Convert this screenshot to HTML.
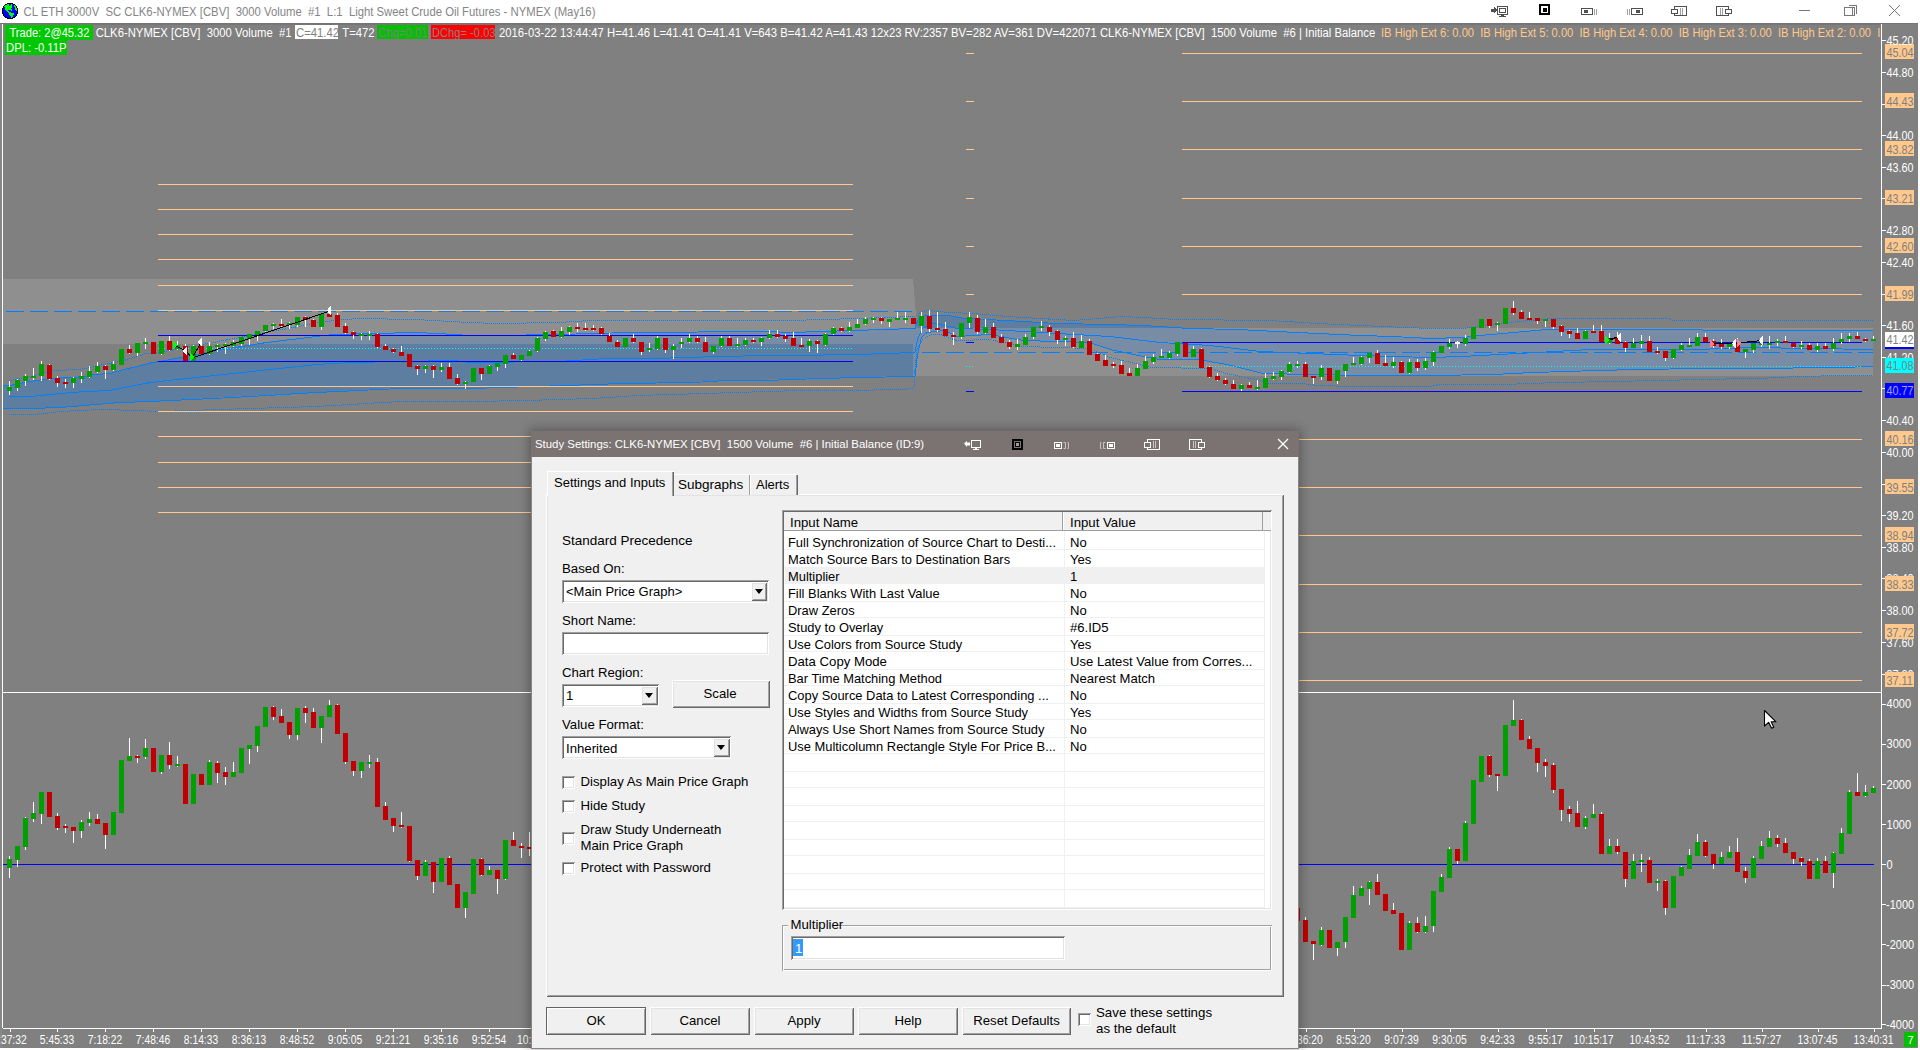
<!DOCTYPE html>
<html><head><meta charset="utf-8"><style>
html,body{margin:0;padding:0;width:1920px;height:1050px;overflow:hidden;background:#fff}
body{position:relative;font-family:"Liberation Sans", sans-serif}
.a{position:absolute}
</style></head><body>
<svg width="1920" height="1050" style="position:absolute;left:0;top:0" font-family='"Liberation Sans", sans-serif' shape-rendering="crispEdges"><rect x="0" y="0" width="1920" height="1050" fill="#ffffff" />
<rect x="0" y="23" width="1918" height="1025" fill="#808080" />
<rect x="0" y="23" width="1920" height="2" fill="#767676" />
<rect x="2" y="24" width="1" height="1004" fill="#ffffff" />
<rect x="0" y="24" width="2" height="1024" fill="#878787" />
<polygon points="3,385.3 9,385.3 30,381.4 51,378 70,376.7 86,376.3 94,374 110,373.3 124,369.4 137,366 152.5,361.7 160,361 216.7,350 266.7,341.7 333,334 415,332 438,333.3 470,334.7 495,335 558,334 630,332.2 766.7,330.8 790,331.7 915,327.5 915,375.8 856.7,377 790,379.2 766.7,379.5 726.7,380.5 693.3,381.7 621.7,383.3 566.7,385.3 470,388.3 400,387.5 316.7,392.5 233,396.7 150,401.3 120,402 60,407 30,408.4 9,408.4 3,408.4" fill="rgba(40,120,210,0.40)" />
<polygon points="915,327.5 917,322 919.5,316 928.3,315 948,315.3 965,318.3 1006.7,320 1056.7,323.3 1110,324.2 1143,325.3 1190,328 1238.3,329.2 1276.7,330.8 1318.3,333.3 1360,335 1393.3,336.3 1430,337.5 1463,337 1480,335 1513.3,332.5 1546.7,329.2 1663.3,328.8 1740,329.5 1823,330.3 1855,329.5 1873,329.5 1873,366.3 1838,366.9 1750,368 1701.7,368.3 1638.3,369.2 1596.7,370.3 1566.7,371.3 1533.3,372.5 1493.3,374.2 1430,375.3 1360,375.3 1310,374.2 1263.3,372.8 1226.7,364.2 1198,359.2 1160,359.2 1143.3,355.8 1110,349.2 1090,342.5 1023.3,340 990,334.2 956.7,335.8 945,330.5 927,331.6 921.3,337.4 917.3,355.6 915,376" fill="rgba(40,120,210,0.40)" />
<polygon points="3,279 913,279 921,376 913,376 913,344 3,344" fill="rgba(172,172,172,0.343)" />
<polygon points="917,328 1873,328 1873,376 921,376" fill="rgba(172,172,172,0.343)" />
<polyline points="3,385.5 9,385.5 30,381.5 51,378.5 70,377.5 86,376.5 94,374.5 110,373.5 124,369.5 137,366.5 152.5,362.5 160,361.5 216.7,350.5 266.7,342.5 333,334.5 415,332.5 438,333.5 470,335.5 495,335.5 558,334.5 630,332.5 766.7,331.5 790,332.5 915,328.5" fill="none" stroke="#0080ff" stroke-width="1" />
<polyline points="9,396.5 30,396.5 60,393.5 86,391.5 110,390.5 150,382.5 233,373.5 316.7,364.5 350,362.5 455,360.5 470,362.5 558,361.5 606.7,358.5 653,358.5 720,356.5 766.7,355.5 790,355.5 856.7,354.5 915,352.5" fill="none" stroke="#0080ff" stroke-width="1" />
<polyline points="3,408.5 9,408.5 30,408.5 60,407.5 120,402.5 150,401.5 233,397.5 316.7,392.5 400,388.5 470,388.5 566.7,385.5 621.7,383.5 693.3,382.5 726.7,380.5 766.7,380.5 790,379.5 856.7,377.5 915,376.5" fill="none" stroke="#0080ff" stroke-width="1" />
<polyline points="915,328.5 917,322.5 919.5,316.5 928.3,315.5 948,315.5 965,318.5 1006.7,320.5 1056.7,323.5 1110,324.5 1143,325.5 1190,328.5 1238.3,329.5 1276.7,331.5 1318.3,333.5 1360,335.5 1393.3,336.5 1430,338.5 1463,337.5 1480,335.5 1513.3,332.5 1546.7,329.5 1663.3,329.5 1740,330.5 1823,330.5 1855,330.5 1873,330.5" fill="none" stroke="#0080ff" stroke-width="1" />
<polyline points="915,352.5 917.8,338.5 922.4,328.5 932.7,323.5 945,325.5 956.7,328.5 990,329.5 1040,332.5 1110,336.5 1160,342.5 1210,345.5 1260,351.5 1310,353.5 1360,355.5 1430,357.5 1462,356.5 1536.7,352.5 1590,349.5 1697,349.5 1750,347.5 1873,349.5" fill="none" stroke="#0080ff" stroke-width="1" />
<polyline points="915,376.5 917.3,356.5 921.3,337.5 927,332.5 945,330.5 956.7,336.5 990,334.5 1023.3,340.5 1090,342.5 1110,349.5 1143.3,356.5 1160,359.5 1198,359.5 1226.7,364.5 1263.3,373.5 1310,374.5 1360,375.5 1430,375.5 1493.3,374.5 1533.3,372.5 1566.7,371.5 1596.7,370.5 1638.3,369.5 1701.7,368.5 1750,368.5 1838,367.5 1873,366.5" fill="none" stroke="#0080ff" stroke-width="1" />
<polyline points="9,380.5 32,376.5 53,370.5 80,369.5 94,366.5 124,360.5 146,353.5 160,352.5 250,335.5 325,321.5 358,318.5 415,319.5 433,320.5 470,322.5 495,323.5 558,322.5 590,320.5 766.7,320.5 790,320.5 856.7,318.5 915,316.5" fill="none" stroke="#0080ff" stroke-width="1" stroke-dasharray="1,1"/>
<polyline points="9,414.5 34,414.5 62,411.5 80,410.5 103,409.5 137,410.5 160,411.5 250,408.5 316.7,406.5 400,401.5 470,401.5 526.7,400.5 591.7,398.5 638.3,395.5 703.3,393.5 766.7,391.5 800,390.5 846.7,390.5 903,389.5 914,388.5" fill="none" stroke="#0080ff" stroke-width="1" stroke-dasharray="1,1"/>
<polyline points="918,315.5 920,312.5 928.3,310.5 948.3,312.5 973.3,313.5 1006.7,316.5 1040,318.5 1073.3,320.5 1110,317.5 1120,316.5 1142,317.5 1176.7,319.5 1270,320.5 1318.3,323.5 1360,325.5 1430,328.5 1463,328.5 1508.3,322.5 1530,320.5 1551.7,318.5 1670,318.5 1672,320.5 1750,320.5 1873,320.5" fill="none" stroke="#0080ff" stroke-width="1" stroke-dasharray="1,1"/>
<polyline points="914,388.5 915,370.5 916.7,350.5 923.3,338.5 931.7,334.5 940,334.5 956.7,340.5 990,339.5 1023.3,346.5 1090,348.5 1110,357.5 1143.3,365.5 1151.7,367.5 1210,368.5 1226.7,373.5 1260,380.5 1270,383.5 1301.7,383.5 1318.3,385.5 1350,386.5 1430,386.5 1440,384.5 1501.7,384.5 1560,382.5 1613.3,381.5 1703.3,379.5 1750,378.5 1760,378.5 1798,376.5 1846,375.5 1873,375.5" fill="none" stroke="#0080ff" stroke-width="1" stroke-dasharray="1,1"/>
<line x1="158" y1="184.5" x2="853" y2="184.5" stroke="#ffc88c" stroke-width="1" />
<line x1="158" y1="209.5" x2="853" y2="209.5" stroke="#ffc88c" stroke-width="1" />
<line x1="158" y1="234.5" x2="853" y2="234.5" stroke="#ffc88c" stroke-width="1" />
<line x1="158" y1="259.5" x2="853" y2="259.5" stroke="#ffc88c" stroke-width="1" />
<line x1="158" y1="285.5" x2="853" y2="285.5" stroke="#ffc88c" stroke-width="1" />
<line x1="158" y1="310.5" x2="853" y2="310.5" stroke="#ffc88c" stroke-width="1" />
<line x1="158" y1="335.5" x2="853" y2="335.5" stroke="#0000ff" stroke-width="1" />
<line x1="158" y1="361.5" x2="853" y2="361.5" stroke="#0000ff" stroke-width="1" />
<line x1="158" y1="386.5" x2="853" y2="386.5" stroke="#ffc88c" stroke-width="1" />
<line x1="158" y1="411.5" x2="853" y2="411.5" stroke="#ffc88c" stroke-width="1" />
<line x1="158" y1="436.5" x2="853" y2="436.5" stroke="#ffc88c" stroke-width="1" />
<line x1="158" y1="462.5" x2="853" y2="462.5" stroke="#ffc88c" stroke-width="1" />
<line x1="158" y1="487.5" x2="853" y2="487.5" stroke="#ffc88c" stroke-width="1" />
<line x1="158" y1="512.5" x2="853" y2="512.5" stroke="#ffc88c" stroke-width="1" />
<line x1="1182" y1="53.5" x2="1862" y2="53.5" stroke="#ffc88c" stroke-width="1" />
<line x1="966" y1="53.5" x2="974" y2="53.5" stroke="#ffc88c" stroke-width="1" />
<line x1="1182" y1="101.5" x2="1862" y2="101.5" stroke="#ffc88c" stroke-width="1" />
<line x1="966" y1="101.5" x2="974" y2="101.5" stroke="#ffc88c" stroke-width="1" />
<line x1="1182" y1="149.5" x2="1862" y2="149.5" stroke="#ffc88c" stroke-width="1" />
<line x1="966" y1="149.5" x2="974" y2="149.5" stroke="#ffc88c" stroke-width="1" />
<line x1="1182" y1="198.5" x2="1862" y2="198.5" stroke="#ffc88c" stroke-width="1" />
<line x1="966" y1="198.5" x2="974" y2="198.5" stroke="#ffc88c" stroke-width="1" />
<line x1="1182" y1="246.5" x2="1862" y2="246.5" stroke="#ffc88c" stroke-width="1" />
<line x1="966" y1="246.5" x2="974" y2="246.5" stroke="#ffc88c" stroke-width="1" />
<line x1="1182" y1="294.5" x2="1862" y2="294.5" stroke="#ffc88c" stroke-width="1" />
<line x1="966" y1="294.5" x2="974" y2="294.5" stroke="#ffc88c" stroke-width="1" />
<line x1="1182" y1="439.5" x2="1862" y2="439.5" stroke="#ffc88c" stroke-width="1" />
<line x1="966" y1="439.5" x2="974" y2="439.5" stroke="#ffc88c" stroke-width="1" />
<line x1="1182" y1="487.5" x2="1862" y2="487.5" stroke="#ffc88c" stroke-width="1" />
<line x1="966" y1="487.5" x2="974" y2="487.5" stroke="#ffc88c" stroke-width="1" />
<line x1="1182" y1="535.5" x2="1862" y2="535.5" stroke="#ffc88c" stroke-width="1" />
<line x1="966" y1="535.5" x2="974" y2="535.5" stroke="#ffc88c" stroke-width="1" />
<line x1="1182" y1="584.5" x2="1862" y2="584.5" stroke="#ffc88c" stroke-width="1" />
<line x1="966" y1="584.5" x2="974" y2="584.5" stroke="#ffc88c" stroke-width="1" />
<line x1="1182" y1="632.5" x2="1862" y2="632.5" stroke="#ffc88c" stroke-width="1" />
<line x1="966" y1="632.5" x2="974" y2="632.5" stroke="#ffc88c" stroke-width="1" />
<line x1="1182" y1="680.5" x2="1862" y2="680.5" stroke="#ffc88c" stroke-width="1" />
<line x1="966" y1="680.5" x2="974" y2="680.5" stroke="#ffc88c" stroke-width="1" />
<line x1="1182" y1="342.5" x2="1862" y2="342.5" stroke="#0000ff" stroke-width="1" />
<line x1="966" y1="342.5" x2="974" y2="342.5" stroke="#0000ff" stroke-width="1" />
<line x1="1182" y1="391.5" x2="1862" y2="391.5" stroke="#0000ff" stroke-width="1" />
<line x1="966" y1="391.5" x2="974" y2="391.5" stroke="#0000ff" stroke-width="1" />
<line x1="158" y1="348.5" x2="853" y2="348.5" stroke="#00ffff" stroke-width="1" stroke-dasharray="1,2"/>
<line x1="1182" y1="366.5" x2="1862" y2="366.5" stroke="#00ffff" stroke-width="1" stroke-dasharray="1,2"/>
<line x1="966" y1="366.5" x2="974" y2="366.5" stroke="#00ffff" stroke-width="1" stroke-dasharray="1,2"/>
<line x1="6" y1="311.5" x2="915" y2="311.5" stroke="#0080ff" stroke-width="1" stroke-dasharray="18,6"/>
<line x1="922" y1="352.5" x2="1873" y2="352.5" stroke="#0080ff" stroke-width="1" stroke-dasharray="18,6"/>
<rect x="9" y="381" width="1" height="14" fill="#ffffff" />
<rect x="7" y="387" width="5" height="4" fill="#00a000" />
<rect x="17" y="379" width="1" height="12" fill="#ffffff" />
<rect x="15" y="380" width="5" height="8" fill="#00a000" />
<rect x="25" y="374" width="1" height="12" fill="#ffffff" />
<rect x="23" y="376" width="5" height="5" fill="#00a000" />
<rect x="33" y="368" width="1" height="12" fill="#ffffff" />
<rect x="31" y="376" width="5" height="2" fill="#00a000" />
<rect x="41" y="361" width="1" height="20" fill="#ffffff" />
<rect x="39" y="364" width="5" height="12" fill="#00a000" />
<rect x="49" y="364" width="1" height="16" fill="#ffffff" />
<rect x="47" y="365" width="5" height="14" fill="#c00000" />
<rect x="57" y="376" width="1" height="11" fill="#ffffff" />
<rect x="55" y="378" width="5" height="5" fill="#c00000" />
<rect x="65" y="379" width="1" height="9" fill="#ffffff" />
<rect x="63" y="382" width="5" height="2" fill="#c00000" />
<rect x="73" y="377" width="1" height="11" fill="#ffffff" />
<rect x="71" y="378" width="5" height="5" fill="#00a000" />
<rect x="81" y="372" width="1" height="11" fill="#ffffff" />
<rect x="79" y="376" width="5" height="3" fill="#00a000" />
<rect x="89" y="366" width="1" height="12" fill="#ffffff" />
<rect x="87" y="371" width="5" height="6" fill="#00a000" />
<rect x="97" y="362" width="1" height="11" fill="#ffffff" />
<rect x="95" y="366" width="5" height="6" fill="#00a000" />
<rect x="105" y="365" width="1" height="14" fill="#ffffff" />
<rect x="103" y="366" width="5" height="4" fill="#c00000" />
<rect x="113" y="361" width="1" height="10" fill="#ffffff" />
<rect x="111" y="364" width="5" height="6" fill="#00a000" />
<rect x="121" y="349" width="1" height="16" fill="#ffffff" />
<rect x="119" y="349" width="5" height="16" fill="#00a000" />
<rect x="129" y="345" width="1" height="9" fill="#ffffff" />
<rect x="127" y="349" width="5" height="4" fill="#c00000" />
<rect x="137" y="343" width="1" height="13" fill="#ffffff" />
<rect x="135" y="343" width="5" height="10" fill="#00a000" />
<rect x="145" y="338" width="1" height="11" fill="#ffffff" />
<rect x="143" y="342" width="5" height="2" fill="#00a000" />
<rect x="153" y="342" width="1" height="12" fill="#ffffff" />
<rect x="151" y="342" width="5" height="12" fill="#c00000" />
<rect x="161" y="341" width="1" height="14" fill="#ffffff" />
<rect x="159" y="341" width="5" height="13" fill="#00a000" />
<rect x="169" y="336" width="1" height="15" fill="#ffffff" />
<rect x="167" y="341" width="5" height="9" fill="#c00000" />
<rect x="177" y="341" width="1" height="9" fill="#ffffff" />
<rect x="175" y="345" width="5" height="4" fill="#00a000" />
<rect x="185" y="344" width="1" height="17" fill="#ffffff" />
<rect x="183" y="346" width="5" height="15" fill="#c00000" />
<rect x="193" y="345" width="1" height="16" fill="#ffffff" />
<rect x="191" y="346" width="5" height="15" fill="#00a000" />
<rect x="201" y="340" width="1" height="14" fill="#ffffff" />
<rect x="199" y="346" width="5" height="8" fill="#c00000" />
<rect x="209" y="342" width="1" height="13" fill="#ffffff" />
<rect x="207" y="346" width="5" height="8" fill="#00a000" />
<rect x="217" y="344" width="1" height="8" fill="#ffffff" />
<rect x="215" y="345" width="5" height="2" fill="#00a000" />
<rect x="225" y="343" width="1" height="11" fill="#ffffff" />
<rect x="223" y="344" width="5" height="2" fill="#00a000" />
<rect x="233" y="340" width="1" height="7" fill="#ffffff" />
<rect x="231" y="342" width="5" height="4" fill="#00a000" />
<rect x="241" y="337" width="1" height="9" fill="#ffffff" />
<rect x="239" y="337" width="5" height="7" fill="#00a000" />
<rect x="249" y="334" width="1" height="11" fill="#ffffff" />
<rect x="247" y="334" width="5" height="5" fill="#00a000" />
<rect x="257" y="331" width="1" height="10" fill="#ffffff" />
<rect x="255" y="331" width="5" height="4" fill="#00a000" />
<rect x="265" y="325" width="1" height="7" fill="#ffffff" />
<rect x="263" y="325" width="5" height="6" fill="#00a000" />
<rect x="273" y="323" width="1" height="6" fill="#ffffff" />
<rect x="271" y="324" width="5" height="2" fill="#00a000" />
<rect x="281" y="319" width="1" height="8" fill="#ffffff" />
<rect x="279" y="324" width="5" height="2" fill="#c00000" />
<rect x="289" y="322" width="1" height="7" fill="#ffffff" />
<rect x="287" y="323" width="5" height="2" fill="#00a000" />
<rect x="297" y="317" width="1" height="10" fill="#ffffff" />
<rect x="295" y="317" width="5" height="8" fill="#00a000" />
<rect x="305" y="316" width="1" height="11" fill="#ffffff" />
<rect x="303" y="317" width="5" height="3" fill="#c00000" />
<rect x="313" y="319" width="1" height="8" fill="#ffffff" />
<rect x="311" y="320" width="5" height="7" fill="#c00000" />
<rect x="321" y="314" width="1" height="16" fill="#ffffff" />
<rect x="319" y="314" width="5" height="13" fill="#00a000" />
<rect x="329" y="313" width="1" height="4" fill="#ffffff" />
<rect x="327" y="314" width="5" height="3" fill="#c00000" />
<rect x="337" y="313" width="1" height="14" fill="#ffffff" />
<rect x="335" y="315" width="5" height="12" fill="#c00000" />
<rect x="345" y="323" width="1" height="11" fill="#ffffff" />
<rect x="343" y="326" width="5" height="7" fill="#c00000" />
<rect x="353" y="331" width="1" height="8" fill="#ffffff" />
<rect x="351" y="332" width="5" height="3" fill="#c00000" />
<rect x="361" y="333" width="1" height="7" fill="#ffffff" />
<rect x="359" y="334" width="5" height="2" fill="#00a000" />
<rect x="369" y="331" width="1" height="9" fill="#ffffff" />
<rect x="367" y="334" width="5" height="2" fill="#00a000" />
<rect x="377" y="333" width="1" height="15" fill="#ffffff" />
<rect x="375" y="334" width="5" height="13" fill="#c00000" />
<rect x="385" y="344" width="1" height="6" fill="#ffffff" />
<rect x="383" y="346" width="5" height="4" fill="#c00000" />
<rect x="393" y="348" width="1" height="5" fill="#ffffff" />
<rect x="391" y="349" width="5" height="3" fill="#c00000" />
<rect x="401" y="346" width="1" height="10" fill="#ffffff" />
<rect x="399" y="352" width="5" height="4" fill="#c00000" />
<rect x="409" y="354" width="1" height="13" fill="#ffffff" />
<rect x="407" y="354" width="5" height="13" fill="#c00000" />
<rect x="417" y="365" width="1" height="10" fill="#ffffff" />
<rect x="415" y="366" width="5" height="3" fill="#c00000" />
<rect x="425" y="365" width="1" height="8" fill="#ffffff" />
<rect x="423" y="366" width="5" height="3" fill="#00a000" />
<rect x="433" y="365" width="1" height="13" fill="#ffffff" />
<rect x="431" y="366" width="5" height="4" fill="#c00000" />
<rect x="441" y="363" width="1" height="9" fill="#ffffff" />
<rect x="439" y="367" width="5" height="3" fill="#00a000" />
<rect x="449" y="363" width="1" height="16" fill="#ffffff" />
<rect x="447" y="367" width="5" height="12" fill="#c00000" />
<rect x="457" y="374" width="1" height="11" fill="#ffffff" />
<rect x="455" y="378" width="5" height="6" fill="#c00000" />
<rect x="465" y="381" width="1" height="8" fill="#ffffff" />
<rect x="463" y="382" width="5" height="2" fill="#00a000" />
<rect x="473" y="368" width="1" height="14" fill="#ffffff" />
<rect x="471" y="368" width="5" height="14" fill="#00a000" />
<rect x="481" y="368" width="1" height="12" fill="#ffffff" />
<rect x="479" y="368" width="5" height="6" fill="#c00000" />
<rect x="489" y="365" width="1" height="9" fill="#ffffff" />
<rect x="487" y="366" width="5" height="8" fill="#00a000" />
<rect x="497" y="363" width="1" height="8" fill="#ffffff" />
<rect x="495" y="363" width="5" height="4" fill="#00a000" />
<rect x="505" y="355" width="1" height="13" fill="#ffffff" />
<rect x="503" y="355" width="5" height="9" fill="#00a000" />
<rect x="513" y="353" width="1" height="6" fill="#ffffff" />
<rect x="511" y="355" width="5" height="4" fill="#c00000" />
<rect x="521" y="355" width="1" height="6" fill="#ffffff" />
<rect x="519" y="355" width="5" height="5" fill="#00a000" />
<rect x="529" y="350" width="1" height="6" fill="#ffffff" />
<rect x="527" y="351" width="5" height="5" fill="#00a000" />
<rect x="537" y="337" width="1" height="15" fill="#ffffff" />
<rect x="535" y="338" width="5" height="13" fill="#00a000" />
<rect x="545" y="331" width="1" height="10" fill="#ffffff" />
<rect x="543" y="332" width="5" height="7" fill="#00a000" />
<rect x="553" y="330" width="1" height="7" fill="#ffffff" />
<rect x="551" y="331" width="5" height="6" fill="#c00000" />
<rect x="561" y="327" width="1" height="11" fill="#ffffff" />
<rect x="559" y="331" width="5" height="6" fill="#00a000" />
<rect x="569" y="326" width="1" height="9" fill="#ffffff" />
<rect x="567" y="327" width="5" height="5" fill="#00a000" />
<rect x="577" y="323" width="1" height="9" fill="#ffffff" />
<rect x="575" y="327" width="5" height="2" fill="#c00000" />
<rect x="585" y="323" width="1" height="8" fill="#ffffff" />
<rect x="583" y="328" width="5" height="2" fill="#c00000" />
<rect x="593" y="325" width="1" height="6" fill="#ffffff" />
<rect x="591" y="328" width="5" height="2" fill="#c00000" />
<rect x="601" y="327" width="1" height="8" fill="#ffffff" />
<rect x="599" y="328" width="5" height="6" fill="#c00000" />
<rect x="609" y="333" width="1" height="9" fill="#ffffff" />
<rect x="607" y="336" width="5" height="6" fill="#c00000" />
<rect x="617" y="340" width="1" height="7" fill="#ffffff" />
<rect x="615" y="342" width="5" height="5" fill="#c00000" />
<rect x="625" y="338" width="1" height="9" fill="#ffffff" />
<rect x="623" y="338" width="5" height="9" fill="#00a000" />
<rect x="633" y="334" width="1" height="9" fill="#ffffff" />
<rect x="631" y="338" width="5" height="4" fill="#c00000" />
<rect x="641" y="342" width="1" height="13" fill="#ffffff" />
<rect x="639" y="342" width="5" height="10" fill="#c00000" />
<rect x="649" y="343" width="1" height="9" fill="#ffffff" />
<rect x="647" y="348" width="5" height="2" fill="#00a000" />
<rect x="657" y="336" width="1" height="14" fill="#ffffff" />
<rect x="655" y="338" width="5" height="11" fill="#00a000" />
<rect x="665" y="338" width="1" height="15" fill="#ffffff" />
<rect x="663" y="338" width="5" height="12" fill="#c00000" />
<rect x="673" y="344" width="1" height="15" fill="#ffffff" />
<rect x="671" y="346" width="5" height="4" fill="#00a000" />
<rect x="681" y="338" width="1" height="10" fill="#ffffff" />
<rect x="679" y="342" width="5" height="2" fill="#00a000" />
<rect x="689" y="334" width="1" height="9" fill="#ffffff" />
<rect x="687" y="338" width="5" height="4" fill="#00a000" />
<rect x="697" y="336" width="1" height="7" fill="#ffffff" />
<rect x="695" y="338" width="5" height="4" fill="#c00000" />
<rect x="705" y="337" width="1" height="15" fill="#ffffff" />
<rect x="703" y="342" width="5" height="10" fill="#c00000" />
<rect x="713" y="346" width="1" height="8" fill="#ffffff" />
<rect x="711" y="346" width="5" height="6" fill="#00a000" />
<rect x="721" y="336" width="1" height="11" fill="#ffffff" />
<rect x="719" y="338" width="5" height="8" fill="#00a000" />
<rect x="729" y="336" width="1" height="10" fill="#ffffff" />
<rect x="727" y="338" width="5" height="8" fill="#c00000" />
<rect x="737" y="338" width="1" height="9" fill="#ffffff" />
<rect x="735" y="344" width="5" height="2" fill="#00a000" />
<rect x="745" y="338" width="1" height="8" fill="#ffffff" />
<rect x="743" y="340" width="5" height="5" fill="#00a000" />
<rect x="753" y="338" width="1" height="5" fill="#ffffff" />
<rect x="751" y="340" width="5" height="2" fill="#c00000" />
<rect x="761" y="337" width="1" height="9" fill="#ffffff" />
<rect x="759" y="338" width="5" height="4" fill="#00a000" />
<rect x="769" y="330" width="1" height="9" fill="#ffffff" />
<rect x="767" y="334" width="5" height="4" fill="#00a000" />
<rect x="777" y="330" width="1" height="8" fill="#ffffff" />
<rect x="775" y="334" width="5" height="3" fill="#c00000" />
<rect x="785" y="334" width="1" height="8" fill="#ffffff" />
<rect x="783" y="336" width="5" height="3" fill="#c00000" />
<rect x="793" y="332" width="1" height="14" fill="#ffffff" />
<rect x="791" y="338" width="5" height="8" fill="#c00000" />
<rect x="801" y="338" width="1" height="9" fill="#ffffff" />
<rect x="799" y="345" width="5" height="2" fill="#c00000" />
<rect x="809" y="339" width="1" height="13" fill="#ffffff" />
<rect x="807" y="341" width="5" height="5" fill="#00a000" />
<rect x="817" y="340" width="1" height="13" fill="#ffffff" />
<rect x="815" y="341" width="5" height="3" fill="#c00000" />
<rect x="825" y="333" width="1" height="13" fill="#ffffff" />
<rect x="823" y="334" width="5" height="11" fill="#00a000" />
<rect x="833" y="327" width="1" height="8" fill="#ffffff" />
<rect x="831" y="328" width="5" height="6" fill="#00a000" />
<rect x="841" y="327" width="1" height="5" fill="#ffffff" />
<rect x="839" y="328" width="5" height="3" fill="#c00000" />
<rect x="849" y="322" width="1" height="10" fill="#ffffff" />
<rect x="847" y="327" width="5" height="4" fill="#00a000" />
<rect x="857" y="319" width="1" height="9" fill="#ffffff" />
<rect x="855" y="324" width="5" height="4" fill="#00a000" />
<rect x="865" y="317" width="1" height="8" fill="#ffffff" />
<rect x="863" y="319" width="5" height="5" fill="#00a000" />
<rect x="873" y="317" width="1" height="6" fill="#ffffff" />
<rect x="871" y="318" width="5" height="2" fill="#00a000" />
<rect x="881" y="317" width="1" height="7" fill="#ffffff" />
<rect x="879" y="318" width="5" height="3" fill="#c00000" />
<rect x="889" y="319" width="1" height="8" fill="#ffffff" />
<rect x="887" y="319" width="5" height="3" fill="#00a000" />
<rect x="897" y="312" width="1" height="8" fill="#ffffff" />
<rect x="895" y="318" width="5" height="2" fill="#00a000" />
<rect x="905" y="312" width="1" height="11" fill="#ffffff" />
<rect x="903" y="318" width="5" height="2" fill="#00a000" />
<rect x="913" y="318" width="1" height="6" fill="#ffffff" />
<rect x="911" y="318" width="5" height="6" fill="#c00000" />
<rect x="921" y="312" width="1" height="21" fill="#ffffff" />
<rect x="919" y="316" width="5" height="10" fill="#00a000" />
<rect x="929" y="310" width="1" height="22" fill="#ffffff" />
<rect x="927" y="316" width="5" height="13" fill="#c00000" />
<rect x="937" y="312" width="1" height="20" fill="#ffffff" />
<rect x="935" y="328" width="5" height="2" fill="#c00000" />
<rect x="945" y="322" width="1" height="14" fill="#ffffff" />
<rect x="943" y="329" width="5" height="7" fill="#c00000" />
<rect x="953" y="332" width="1" height="13" fill="#ffffff" />
<rect x="951" y="335" width="5" height="2" fill="#c00000" />
<rect x="961" y="323" width="1" height="16" fill="#ffffff" />
<rect x="959" y="323" width="5" height="14" fill="#00a000" />
<rect x="969" y="312" width="1" height="16" fill="#ffffff" />
<rect x="967" y="317" width="5" height="6" fill="#00a000" />
<rect x="977" y="315" width="1" height="19" fill="#ffffff" />
<rect x="975" y="318" width="5" height="14" fill="#c00000" />
<rect x="985" y="319" width="1" height="15" fill="#ffffff" />
<rect x="983" y="327" width="5" height="6" fill="#00a000" />
<rect x="993" y="323" width="1" height="15" fill="#ffffff" />
<rect x="991" y="327" width="5" height="11" fill="#c00000" />
<rect x="1001" y="334" width="1" height="9" fill="#ffffff" />
<rect x="999" y="337" width="5" height="6" fill="#c00000" />
<rect x="1009" y="340" width="1" height="9" fill="#ffffff" />
<rect x="1007" y="342" width="5" height="5" fill="#c00000" />
<rect x="1017" y="339" width="1" height="11" fill="#ffffff" />
<rect x="1015" y="344" width="5" height="3" fill="#00a000" />
<rect x="1025" y="334" width="1" height="11" fill="#ffffff" />
<rect x="1023" y="337" width="5" height="8" fill="#00a000" />
<rect x="1033" y="327" width="1" height="12" fill="#ffffff" />
<rect x="1031" y="327" width="5" height="10" fill="#00a000" />
<rect x="1041" y="321" width="1" height="10" fill="#ffffff" />
<rect x="1039" y="326" width="5" height="2" fill="#00a000" />
<rect x="1049" y="325" width="1" height="11" fill="#ffffff" />
<rect x="1047" y="327" width="5" height="5" fill="#c00000" />
<rect x="1057" y="330" width="1" height="14" fill="#ffffff" />
<rect x="1055" y="331" width="5" height="9" fill="#c00000" />
<rect x="1065" y="336" width="1" height="10" fill="#ffffff" />
<rect x="1063" y="338" width="5" height="2" fill="#00a000" />
<rect x="1073" y="332" width="1" height="16" fill="#ffffff" />
<rect x="1071" y="338" width="5" height="9" fill="#c00000" />
<rect x="1081" y="335" width="1" height="13" fill="#ffffff" />
<rect x="1079" y="341" width="5" height="7" fill="#00a000" />
<rect x="1089" y="339" width="1" height="16" fill="#ffffff" />
<rect x="1087" y="341" width="5" height="14" fill="#c00000" />
<rect x="1097" y="353" width="1" height="8" fill="#ffffff" />
<rect x="1095" y="354" width="5" height="7" fill="#c00000" />
<rect x="1105" y="355" width="1" height="11" fill="#ffffff" />
<rect x="1103" y="360" width="5" height="6" fill="#c00000" />
<rect x="1113" y="362" width="1" height="6" fill="#ffffff" />
<rect x="1111" y="364" width="5" height="2" fill="#c00000" />
<rect x="1121" y="361" width="1" height="13" fill="#ffffff" />
<rect x="1119" y="365" width="5" height="9" fill="#c00000" />
<rect x="1129" y="368" width="1" height="8" fill="#ffffff" />
<rect x="1127" y="373" width="5" height="3" fill="#c00000" />
<rect x="1137" y="364" width="1" height="12" fill="#ffffff" />
<rect x="1135" y="368" width="5" height="8" fill="#00a000" />
<rect x="1145" y="356" width="1" height="13" fill="#ffffff" />
<rect x="1143" y="361" width="5" height="8" fill="#00a000" />
<rect x="1153" y="354" width="1" height="10" fill="#ffffff" />
<rect x="1151" y="357" width="5" height="5" fill="#00a000" />
<rect x="1161" y="349" width="1" height="9" fill="#ffffff" />
<rect x="1159" y="356" width="5" height="2" fill="#00a000" />
<rect x="1169" y="351" width="1" height="8" fill="#ffffff" />
<rect x="1167" y="353" width="5" height="5" fill="#00a000" />
<rect x="1177" y="342" width="1" height="14" fill="#ffffff" />
<rect x="1175" y="342" width="5" height="12" fill="#00a000" />
<rect x="1185" y="343" width="1" height="14" fill="#ffffff" />
<rect x="1183" y="343" width="5" height="14" fill="#c00000" />
<rect x="1193" y="346" width="1" height="11" fill="#ffffff" />
<rect x="1191" y="349" width="5" height="8" fill="#00a000" />
<rect x="1201" y="348" width="1" height="20" fill="#ffffff" />
<rect x="1199" y="349" width="5" height="19" fill="#c00000" />
<rect x="1209" y="366" width="1" height="12" fill="#ffffff" />
<rect x="1207" y="367" width="5" height="10" fill="#c00000" />
<rect x="1217" y="373" width="1" height="8" fill="#ffffff" />
<rect x="1215" y="376" width="5" height="4" fill="#c00000" />
<rect x="1225" y="378" width="1" height="7" fill="#ffffff" />
<rect x="1223" y="380" width="5" height="4" fill="#c00000" />
<rect x="1233" y="380" width="1" height="9" fill="#ffffff" />
<rect x="1231" y="384" width="5" height="5" fill="#c00000" />
<rect x="1241" y="384" width="1" height="7" fill="#ffffff" />
<rect x="1239" y="385" width="5" height="4" fill="#00a000" />
<rect x="1249" y="382" width="1" height="6" fill="#ffffff" />
<rect x="1247" y="385" width="5" height="3" fill="#c00000" />
<rect x="1257" y="380" width="1" height="10" fill="#ffffff" />
<rect x="1255" y="387" width="5" height="2" fill="#00a000" />
<rect x="1265" y="373" width="1" height="15" fill="#ffffff" />
<rect x="1263" y="378" width="5" height="10" fill="#00a000" />
<rect x="1273" y="372" width="1" height="8" fill="#ffffff" />
<rect x="1271" y="376" width="5" height="3" fill="#00a000" />
<rect x="1281" y="370" width="1" height="10" fill="#ffffff" />
<rect x="1279" y="371" width="5" height="6" fill="#00a000" />
<rect x="1289" y="362" width="1" height="11" fill="#ffffff" />
<rect x="1287" y="364" width="5" height="8" fill="#00a000" />
<rect x="1297" y="361" width="1" height="7" fill="#ffffff" />
<rect x="1295" y="364" width="5" height="2" fill="#00a000" />
<rect x="1305" y="362" width="1" height="15" fill="#ffffff" />
<rect x="1303" y="364" width="5" height="13" fill="#c00000" />
<rect x="1313" y="376" width="1" height="8" fill="#ffffff" />
<rect x="1311" y="376" width="5" height="2" fill="#c00000" />
<rect x="1321" y="365" width="1" height="15" fill="#ffffff" />
<rect x="1319" y="368" width="5" height="9" fill="#00a000" />
<rect x="1329" y="368" width="1" height="13" fill="#ffffff" />
<rect x="1327" y="368" width="5" height="13" fill="#c00000" />
<rect x="1337" y="370" width="1" height="14" fill="#ffffff" />
<rect x="1335" y="370" width="5" height="11" fill="#00a000" />
<rect x="1345" y="364" width="1" height="13" fill="#ffffff" />
<rect x="1343" y="364" width="5" height="7" fill="#00a000" />
<rect x="1353" y="357" width="1" height="8" fill="#ffffff" />
<rect x="1351" y="363" width="5" height="2" fill="#00a000" />
<rect x="1361" y="356" width="1" height="9" fill="#ffffff" />
<rect x="1359" y="357" width="5" height="7" fill="#00a000" />
<rect x="1369" y="353" width="1" height="10" fill="#ffffff" />
<rect x="1367" y="353" width="5" height="5" fill="#00a000" />
<rect x="1377" y="350" width="1" height="14" fill="#ffffff" />
<rect x="1375" y="353" width="5" height="11" fill="#c00000" />
<rect x="1385" y="355" width="1" height="11" fill="#ffffff" />
<rect x="1383" y="363" width="5" height="3" fill="#c00000" />
<rect x="1393" y="357" width="1" height="11" fill="#ffffff" />
<rect x="1391" y="362" width="5" height="4" fill="#00a000" />
<rect x="1401" y="361" width="1" height="12" fill="#ffffff" />
<rect x="1399" y="362" width="5" height="11" fill="#c00000" />
<rect x="1409" y="359" width="1" height="15" fill="#ffffff" />
<rect x="1407" y="362" width="5" height="11" fill="#00a000" />
<rect x="1417" y="359" width="1" height="12" fill="#ffffff" />
<rect x="1415" y="362" width="5" height="6" fill="#c00000" />
<rect x="1425" y="358" width="1" height="12" fill="#ffffff" />
<rect x="1423" y="361" width="5" height="7" fill="#00a000" />
<rect x="1433" y="351" width="1" height="15" fill="#ffffff" />
<rect x="1431" y="352" width="5" height="10" fill="#00a000" />
<rect x="1441" y="346" width="1" height="7" fill="#ffffff" />
<rect x="1439" y="346" width="5" height="7" fill="#00a000" />
<rect x="1449" y="339" width="1" height="10" fill="#ffffff" />
<rect x="1447" y="343" width="5" height="4" fill="#00a000" />
<rect x="1457" y="341" width="1" height="7" fill="#ffffff" />
<rect x="1455" y="342" width="5" height="2" fill="#ffffff" />
<rect x="1465" y="335" width="1" height="11" fill="#ffffff" />
<rect x="1463" y="338" width="5" height="6" fill="#00a000" />
<rect x="1473" y="327" width="1" height="12" fill="#ffffff" />
<rect x="1471" y="327" width="5" height="12" fill="#00a000" />
<rect x="1481" y="319" width="1" height="9" fill="#ffffff" />
<rect x="1479" y="319" width="5" height="9" fill="#00a000" />
<rect x="1489" y="319" width="1" height="9" fill="#ffffff" />
<rect x="1487" y="319" width="5" height="7" fill="#c00000" />
<rect x="1497" y="322" width="1" height="9" fill="#ffffff" />
<rect x="1495" y="323" width="5" height="2" fill="#00a000" />
<rect x="1505" y="308" width="1" height="16" fill="#ffffff" />
<rect x="1503" y="308" width="5" height="16" fill="#00a000" />
<rect x="1513" y="301" width="1" height="14" fill="#ffffff" />
<rect x="1511" y="308" width="5" height="5" fill="#c00000" />
<rect x="1521" y="310" width="1" height="9" fill="#ffffff" />
<rect x="1519" y="312" width="5" height="7" fill="#c00000" />
<rect x="1529" y="312" width="1" height="7" fill="#ffffff" />
<rect x="1527" y="318" width="5" height="2" fill="#c00000" />
<rect x="1537" y="318" width="1" height="6" fill="#ffffff" />
<rect x="1535" y="318" width="5" height="3" fill="#c00000" />
<rect x="1545" y="319" width="1" height="8" fill="#ffffff" />
<rect x="1543" y="319" width="5" height="2" fill="#00a000" />
<rect x="1553" y="319" width="1" height="10" fill="#ffffff" />
<rect x="1551" y="319" width="5" height="8" fill="#c00000" />
<rect x="1561" y="325" width="1" height="11" fill="#ffffff" />
<rect x="1559" y="326" width="5" height="6" fill="#c00000" />
<rect x="1569" y="330" width="1" height="8" fill="#ffffff" />
<rect x="1567" y="331" width="5" height="3" fill="#c00000" />
<rect x="1577" y="328" width="1" height="11" fill="#ffffff" />
<rect x="1575" y="333" width="5" height="6" fill="#c00000" />
<rect x="1585" y="330" width="1" height="9" fill="#ffffff" />
<rect x="1583" y="331" width="5" height="8" fill="#00a000" />
<rect x="1593" y="325" width="1" height="7" fill="#ffffff" />
<rect x="1591" y="331" width="5" height="2" fill="#c00000" />
<rect x="1601" y="325" width="1" height="17" fill="#ffffff" />
<rect x="1599" y="331" width="5" height="11" fill="#c00000" />
<rect x="1609" y="333" width="1" height="11" fill="#ffffff" />
<rect x="1607" y="338" width="5" height="5" fill="#00a000" />
<rect x="1617" y="332" width="1" height="12" fill="#ffffff" />
<rect x="1615" y="338" width="5" height="6" fill="#c00000" />
<rect x="1625" y="341" width="1" height="11" fill="#ffffff" />
<rect x="1623" y="342" width="5" height="6" fill="#c00000" />
<rect x="1633" y="338" width="1" height="10" fill="#ffffff" />
<rect x="1631" y="343" width="5" height="5" fill="#00a000" />
<rect x="1641" y="335" width="1" height="13" fill="#ffffff" />
<rect x="1639" y="341" width="5" height="3" fill="#00a000" />
<rect x="1649" y="336" width="1" height="16" fill="#ffffff" />
<rect x="1647" y="341" width="5" height="11" fill="#c00000" />
<rect x="1657" y="347" width="1" height="7" fill="#ffffff" />
<rect x="1655" y="351" width="5" height="2" fill="#c00000" />
<rect x="1665" y="351" width="1" height="10" fill="#ffffff" />
<rect x="1663" y="351" width="5" height="7" fill="#c00000" />
<rect x="1673" y="349" width="1" height="10" fill="#ffffff" />
<rect x="1671" y="349" width="5" height="9" fill="#00a000" />
<rect x="1681" y="343" width="1" height="8" fill="#ffffff" />
<rect x="1679" y="345" width="5" height="5" fill="#00a000" />
<rect x="1689" y="338" width="1" height="8" fill="#ffffff" />
<rect x="1687" y="345" width="5" height="2" fill="#00a000" />
<rect x="1697" y="333" width="1" height="13" fill="#ffffff" />
<rect x="1695" y="337" width="5" height="9" fill="#00a000" />
<rect x="1705" y="333" width="1" height="9" fill="#ffffff" />
<rect x="1703" y="337" width="5" height="5" fill="#c00000" />
<rect x="1713" y="339" width="1" height="9" fill="#ffffff" />
<rect x="1711" y="341" width="5" height="5" fill="#c00000" />
<rect x="1721" y="339" width="1" height="10" fill="#ffffff" />
<rect x="1719" y="344" width="5" height="3" fill="#c00000" />
<rect x="1729" y="343" width="1" height="6" fill="#ffffff" />
<rect x="1727" y="343" width="5" height="4" fill="#00a000" />
<rect x="1737" y="338" width="1" height="14" fill="#ffffff" />
<rect x="1735" y="343" width="5" height="9" fill="#c00000" />
<rect x="1745" y="349" width="1" height="9" fill="#ffffff" />
<rect x="1743" y="349" width="5" height="3" fill="#00a000" />
<rect x="1753" y="343" width="1" height="10" fill="#ffffff" />
<rect x="1751" y="343" width="5" height="7" fill="#00a000" />
<rect x="1761" y="337" width="1" height="10" fill="#ffffff" />
<rect x="1759" y="343" width="5" height="2" fill="#00a000" />
<rect x="1769" y="336" width="1" height="13" fill="#ffffff" />
<rect x="1767" y="343" width="5" height="2" fill="#00a000" />
<rect x="1777" y="339" width="1" height="7" fill="#ffffff" />
<rect x="1775" y="341" width="5" height="2" fill="#00a000" />
<rect x="1785" y="336" width="1" height="6" fill="#ffffff" />
<rect x="1783" y="341" width="5" height="2" fill="#c00000" />
<rect x="1793" y="343" width="1" height="5" fill="#ffffff" />
<rect x="1791" y="343" width="5" height="4" fill="#c00000" />
<rect x="1801" y="341" width="1" height="8" fill="#ffffff" />
<rect x="1799" y="345" width="5" height="2" fill="#00a000" />
<rect x="1809" y="343" width="1" height="7" fill="#ffffff" />
<rect x="1807" y="345" width="5" height="5" fill="#c00000" />
<rect x="1817" y="343" width="1" height="9" fill="#ffffff" />
<rect x="1815" y="346" width="5" height="4" fill="#00a000" />
<rect x="1825" y="343" width="1" height="6" fill="#ffffff" />
<rect x="1823" y="346" width="5" height="3" fill="#c00000" />
<rect x="1833" y="338" width="1" height="13" fill="#ffffff" />
<rect x="1831" y="343" width="5" height="6" fill="#00a000" />
<rect x="1841" y="333" width="1" height="11" fill="#ffffff" />
<rect x="1839" y="339" width="5" height="3" fill="#00a000" />
<rect x="1849" y="333" width="1" height="9" fill="#ffffff" />
<rect x="1847" y="336" width="5" height="3" fill="#00a000" />
<rect x="1857" y="332" width="1" height="7" fill="#ffffff" />
<rect x="1855" y="336" width="5" height="3" fill="#c00000" />
<rect x="1865" y="338" width="1" height="4" fill="#ffffff" />
<rect x="1863" y="339" width="5" height="2" fill="#c00000" />
<rect x="1873" y="336" width="1" height="5" fill="#ffffff" />
<rect x="1871" y="339" width="5" height="2" fill="#00a000" />
<polyline points="173,344 187,352 192,358 201,343" fill="none" stroke="#000" stroke-width="1" />
<polyline points="192,358 330,311" fill="none" stroke="#000" stroke-width="1" />
<polyline points="1605,340 1618,337 1610,340" fill="none" stroke="#000" stroke-width="1" />
<polyline points="1711,343.7 1730,343.7 1762,340.5" fill="none" stroke="#000" stroke-width="1" />
<polygon points="173,341 173,349 177,345" fill="#00ff00" />
<polygon points="190,353 190,361 194,357" fill="#00ff00" />
<polygon points="187,346 187,356 183,351" fill="#ffffff" />
<polygon points="331,305 331,316 327,310.5" fill="#ffffff" />
<polygon points="202,337 202,347 198,342" fill="#ffffff" />
<polygon points="1605,336 1605,344 1609,340" fill="#00ff00" />
<polygon points="1621,332 1621,343 1617,337.5" fill="#ffffff" />
<polygon points="1710,340 1710,348 1714,344" fill="#ff8080" />
<polygon points="1736,338 1736,349 1732,343.5" fill="#ffffff" />
<polygon points="1737,339 1737,347 1741,343" fill="#ff8080" />
<polygon points="1763,335 1763,346 1759,340.5" fill="#ffffff" />
<rect x="3" y="692" width="1879" height="1" fill="#ffffff" />
<rect x="1881" y="24" width="1" height="1005" fill="#ffffff" />
<rect x="3" y="1028" width="1879" height="1" fill="#ffffff" />
<line x1="3" y1="864.5" x2="1874" y2="864.5" stroke="#0000ff" stroke-width="1" />
<rect x="9" y="856" width="1" height="22" fill="#ffffff" />
<rect x="7" y="859" width="5" height="9" fill="#00a000" />
<rect x="17" y="846" width="1" height="21" fill="#ffffff" />
<rect x="15" y="846" width="5" height="14" fill="#00a000" />
<rect x="25" y="817" width="1" height="33" fill="#ffffff" />
<rect x="23" y="818" width="5" height="29" fill="#00a000" />
<rect x="33" y="802" width="1" height="20" fill="#ffffff" />
<rect x="31" y="813" width="5" height="6" fill="#00a000" />
<rect x="41" y="792" width="1" height="32" fill="#ffffff" />
<rect x="39" y="792" width="5" height="22" fill="#00a000" />
<rect x="49" y="792" width="1" height="25" fill="#ffffff" />
<rect x="47" y="792" width="5" height="25" fill="#c00000" />
<rect x="57" y="813" width="1" height="17" fill="#ffffff" />
<rect x="55" y="816" width="5" height="12" fill="#c00000" />
<rect x="65" y="824" width="1" height="9" fill="#ffffff" />
<rect x="63" y="826" width="5" height="2" fill="#c00000" />
<rect x="73" y="827" width="1" height="16" fill="#ffffff" />
<rect x="71" y="827" width="5" height="4" fill="#c00000" />
<rect x="81" y="820" width="1" height="18" fill="#ffffff" />
<rect x="79" y="822" width="5" height="9" fill="#00a000" />
<rect x="89" y="812" width="1" height="14" fill="#ffffff" />
<rect x="87" y="819" width="5" height="4" fill="#00a000" />
<rect x="97" y="814" width="1" height="10" fill="#ffffff" />
<rect x="95" y="819" width="5" height="5" fill="#c00000" />
<rect x="105" y="823" width="1" height="26" fill="#ffffff" />
<rect x="103" y="823" width="5" height="12" fill="#c00000" />
<rect x="113" y="812" width="1" height="23" fill="#ffffff" />
<rect x="111" y="812" width="5" height="23" fill="#00a000" />
<rect x="121" y="760" width="1" height="53" fill="#ffffff" />
<rect x="119" y="760" width="5" height="53" fill="#00a000" />
<rect x="129" y="738" width="1" height="23" fill="#ffffff" />
<rect x="127" y="756" width="5" height="5" fill="#00a000" />
<rect x="137" y="755" width="1" height="8" fill="#ffffff" />
<rect x="135" y="756" width="5" height="2" fill="#c00000" />
<rect x="145" y="739" width="1" height="20" fill="#ffffff" />
<rect x="143" y="748" width="5" height="9" fill="#00a000" />
<rect x="153" y="748" width="1" height="24" fill="#ffffff" />
<rect x="151" y="748" width="5" height="24" fill="#c00000" />
<rect x="161" y="755" width="1" height="19" fill="#ffffff" />
<rect x="159" y="755" width="5" height="17" fill="#00a000" />
<rect x="169" y="742" width="1" height="27" fill="#ffffff" />
<rect x="167" y="755" width="5" height="10" fill="#c00000" />
<rect x="177" y="756" width="1" height="11" fill="#ffffff" />
<rect x="175" y="764" width="5" height="2" fill="#00a000" />
<rect x="185" y="764" width="1" height="40" fill="#ffffff" />
<rect x="183" y="764" width="5" height="40" fill="#c00000" />
<rect x="193" y="774" width="1" height="30" fill="#ffffff" />
<rect x="191" y="774" width="5" height="30" fill="#00a000" />
<rect x="201" y="774" width="1" height="11" fill="#ffffff" />
<rect x="199" y="774" width="5" height="11" fill="#c00000" />
<rect x="209" y="760" width="1" height="25" fill="#ffffff" />
<rect x="207" y="762" width="5" height="23" fill="#00a000" />
<rect x="217" y="761" width="1" height="22" fill="#ffffff" />
<rect x="215" y="763" width="5" height="10" fill="#c00000" />
<rect x="225" y="767" width="1" height="18" fill="#ffffff" />
<rect x="223" y="772" width="5" height="5" fill="#c00000" />
<rect x="233" y="762" width="1" height="15" fill="#ffffff" />
<rect x="231" y="772" width="5" height="5" fill="#00a000" />
<rect x="241" y="748" width="1" height="25" fill="#ffffff" />
<rect x="239" y="748" width="5" height="25" fill="#00a000" />
<rect x="249" y="745" width="1" height="19" fill="#ffffff" />
<rect x="247" y="745" width="5" height="4" fill="#00a000" />
<rect x="257" y="726" width="1" height="26" fill="#ffffff" />
<rect x="255" y="726" width="5" height="20" fill="#00a000" />
<rect x="265" y="707" width="1" height="20" fill="#ffffff" />
<rect x="263" y="707" width="5" height="20" fill="#00a000" />
<rect x="273" y="706" width="1" height="14" fill="#ffffff" />
<rect x="271" y="707" width="5" height="10" fill="#c00000" />
<rect x="281" y="709" width="1" height="14" fill="#ffffff" />
<rect x="279" y="716" width="5" height="7" fill="#c00000" />
<rect x="289" y="722" width="1" height="17" fill="#ffffff" />
<rect x="287" y="722" width="5" height="13" fill="#c00000" />
<rect x="297" y="708" width="1" height="32" fill="#ffffff" />
<rect x="295" y="708" width="5" height="27" fill="#00a000" />
<rect x="305" y="706" width="1" height="17" fill="#ffffff" />
<rect x="303" y="708" width="5" height="5" fill="#c00000" />
<rect x="313" y="708" width="1" height="20" fill="#ffffff" />
<rect x="311" y="712" width="5" height="16" fill="#c00000" />
<rect x="321" y="716" width="1" height="27" fill="#ffffff" />
<rect x="319" y="716" width="5" height="12" fill="#00a000" />
<rect x="329" y="700" width="1" height="17" fill="#ffffff" />
<rect x="327" y="705" width="5" height="12" fill="#00a000" />
<rect x="337" y="704" width="1" height="30" fill="#ffffff" />
<rect x="335" y="705" width="5" height="29" fill="#c00000" />
<rect x="345" y="733" width="1" height="31" fill="#ffffff" />
<rect x="343" y="733" width="5" height="29" fill="#c00000" />
<rect x="353" y="761" width="1" height="15" fill="#ffffff" />
<rect x="351" y="761" width="5" height="10" fill="#c00000" />
<rect x="361" y="762" width="1" height="16" fill="#ffffff" />
<rect x="359" y="762" width="5" height="9" fill="#00a000" />
<rect x="369" y="755" width="1" height="13" fill="#ffffff" />
<rect x="367" y="762" width="5" height="2" fill="#00a000" />
<rect x="377" y="758" width="1" height="49" fill="#ffffff" />
<rect x="375" y="762" width="5" height="45" fill="#c00000" />
<rect x="385" y="802" width="1" height="18" fill="#ffffff" />
<rect x="383" y="806" width="5" height="14" fill="#c00000" />
<rect x="393" y="818" width="1" height="14" fill="#ffffff" />
<rect x="391" y="818" width="5" height="8" fill="#c00000" />
<rect x="401" y="812" width="1" height="16" fill="#ffffff" />
<rect x="399" y="825" width="5" height="2" fill="#c00000" />
<rect x="409" y="826" width="1" height="36" fill="#ffffff" />
<rect x="407" y="826" width="5" height="35" fill="#c00000" />
<rect x="417" y="860" width="1" height="20" fill="#ffffff" />
<rect x="415" y="860" width="5" height="16" fill="#c00000" />
<rect x="425" y="860" width="1" height="16" fill="#ffffff" />
<rect x="423" y="862" width="5" height="14" fill="#00a000" />
<rect x="433" y="862" width="1" height="31" fill="#ffffff" />
<rect x="431" y="862" width="5" height="20" fill="#c00000" />
<rect x="441" y="858" width="1" height="24" fill="#ffffff" />
<rect x="439" y="858" width="5" height="24" fill="#00a000" />
<rect x="449" y="856" width="1" height="29" fill="#ffffff" />
<rect x="447" y="858" width="5" height="27" fill="#c00000" />
<rect x="457" y="884" width="1" height="24" fill="#ffffff" />
<rect x="455" y="884" width="5" height="24" fill="#c00000" />
<rect x="465" y="892" width="1" height="26" fill="#ffffff" />
<rect x="463" y="892" width="5" height="16" fill="#00a000" />
<rect x="473" y="859" width="1" height="35" fill="#ffffff" />
<rect x="471" y="859" width="5" height="35" fill="#00a000" />
<rect x="481" y="858" width="1" height="18" fill="#ffffff" />
<rect x="479" y="859" width="5" height="16" fill="#c00000" />
<rect x="489" y="866" width="1" height="9" fill="#ffffff" />
<rect x="487" y="870" width="5" height="5" fill="#00a000" />
<rect x="497" y="870" width="1" height="24" fill="#ffffff" />
<rect x="495" y="870" width="5" height="9" fill="#c00000" />
<rect x="505" y="840" width="1" height="40" fill="#ffffff" />
<rect x="503" y="840" width="5" height="39" fill="#00a000" />
<rect x="513" y="832" width="1" height="14" fill="#ffffff" />
<rect x="511" y="840" width="5" height="6" fill="#c00000" />
<rect x="521" y="843" width="1" height="15" fill="#ffffff" />
<rect x="519" y="846" width="5" height="2" fill="#c00000" />
<rect x="529" y="832" width="1" height="24" fill="#ffffff" />
<rect x="527" y="847" width="5" height="2" fill="#c00000" />
<rect x="1297" y="908" width="1" height="13" fill="#ffffff" />
<rect x="1295" y="908" width="5" height="13" fill="#c00000" />
<rect x="1305" y="917" width="1" height="25" fill="#ffffff" />
<rect x="1303" y="920" width="5" height="22" fill="#c00000" />
<rect x="1313" y="941" width="1" height="19" fill="#ffffff" />
<rect x="1311" y="941" width="5" height="3" fill="#c00000" />
<rect x="1321" y="927" width="1" height="19" fill="#ffffff" />
<rect x="1319" y="930" width="5" height="15" fill="#00a000" />
<rect x="1329" y="930" width="1" height="18" fill="#ffffff" />
<rect x="1327" y="930" width="5" height="18" fill="#c00000" />
<rect x="1337" y="942" width="1" height="14" fill="#ffffff" />
<rect x="1335" y="942" width="5" height="6" fill="#00a000" />
<rect x="1345" y="917" width="1" height="31" fill="#ffffff" />
<rect x="1343" y="917" width="5" height="25" fill="#00a000" />
<rect x="1353" y="886" width="1" height="32" fill="#ffffff" />
<rect x="1351" y="895" width="5" height="23" fill="#00a000" />
<rect x="1361" y="886" width="1" height="10" fill="#ffffff" />
<rect x="1359" y="888" width="5" height="8" fill="#00a000" />
<rect x="1369" y="881" width="1" height="24" fill="#ffffff" />
<rect x="1367" y="882" width="5" height="7" fill="#00a000" />
<rect x="1377" y="874" width="1" height="21" fill="#ffffff" />
<rect x="1375" y="882" width="5" height="13" fill="#c00000" />
<rect x="1385" y="894" width="1" height="17" fill="#ffffff" />
<rect x="1383" y="894" width="5" height="17" fill="#c00000" />
<rect x="1393" y="903" width="1" height="11" fill="#ffffff" />
<rect x="1391" y="910" width="5" height="4" fill="#c00000" />
<rect x="1401" y="913" width="1" height="37" fill="#ffffff" />
<rect x="1399" y="913" width="5" height="37" fill="#c00000" />
<rect x="1409" y="921" width="1" height="29" fill="#ffffff" />
<rect x="1407" y="923" width="5" height="27" fill="#00a000" />
<rect x="1417" y="917" width="1" height="16" fill="#ffffff" />
<rect x="1415" y="923" width="5" height="9" fill="#c00000" />
<rect x="1425" y="916" width="1" height="17" fill="#ffffff" />
<rect x="1423" y="926" width="5" height="6" fill="#00a000" />
<rect x="1433" y="891" width="1" height="41" fill="#ffffff" />
<rect x="1431" y="891" width="5" height="35" fill="#00a000" />
<rect x="1441" y="874" width="1" height="18" fill="#ffffff" />
<rect x="1439" y="877" width="5" height="15" fill="#00a000" />
<rect x="1449" y="847" width="1" height="31" fill="#ffffff" />
<rect x="1447" y="849" width="5" height="29" fill="#00a000" />
<rect x="1457" y="849" width="1" height="15" fill="#ffffff" />
<rect x="1455" y="849" width="5" height="12" fill="#c00000" />
<rect x="1465" y="821" width="1" height="40" fill="#ffffff" />
<rect x="1463" y="823" width="5" height="38" fill="#00a000" />
<rect x="1473" y="780" width="1" height="44" fill="#ffffff" />
<rect x="1471" y="780" width="5" height="44" fill="#00a000" />
<rect x="1481" y="756" width="1" height="26" fill="#ffffff" />
<rect x="1479" y="756" width="5" height="26" fill="#00a000" />
<rect x="1489" y="755" width="1" height="22" fill="#ffffff" />
<rect x="1487" y="756" width="5" height="19" fill="#c00000" />
<rect x="1497" y="774" width="1" height="17" fill="#ffffff" />
<rect x="1495" y="774" width="5" height="2" fill="#c00000" />
<rect x="1505" y="725" width="1" height="51" fill="#ffffff" />
<rect x="1503" y="725" width="5" height="51" fill="#00a000" />
<rect x="1513" y="700" width="1" height="26" fill="#ffffff" />
<rect x="1511" y="720" width="5" height="6" fill="#00a000" />
<rect x="1521" y="719" width="1" height="21" fill="#ffffff" />
<rect x="1519" y="720" width="5" height="20" fill="#c00000" />
<rect x="1529" y="736" width="1" height="13" fill="#ffffff" />
<rect x="1527" y="739" width="5" height="10" fill="#c00000" />
<rect x="1537" y="748" width="1" height="24" fill="#ffffff" />
<rect x="1535" y="748" width="5" height="15" fill="#c00000" />
<rect x="1545" y="759" width="1" height="18" fill="#ffffff" />
<rect x="1543" y="762" width="5" height="4" fill="#c00000" />
<rect x="1553" y="763" width="1" height="30" fill="#ffffff" />
<rect x="1551" y="765" width="5" height="25" fill="#c00000" />
<rect x="1561" y="789" width="1" height="32" fill="#ffffff" />
<rect x="1559" y="789" width="5" height="21" fill="#c00000" />
<rect x="1569" y="806" width="1" height="16" fill="#ffffff" />
<rect x="1567" y="809" width="5" height="5" fill="#c00000" />
<rect x="1577" y="801" width="1" height="26" fill="#ffffff" />
<rect x="1575" y="813" width="5" height="14" fill="#c00000" />
<rect x="1585" y="816" width="1" height="13" fill="#ffffff" />
<rect x="1583" y="818" width="5" height="9" fill="#00a000" />
<rect x="1593" y="804" width="1" height="14" fill="#ffffff" />
<rect x="1591" y="814" width="5" height="4" fill="#00a000" />
<rect x="1601" y="812" width="1" height="42" fill="#ffffff" />
<rect x="1599" y="814" width="5" height="40" fill="#c00000" />
<rect x="1609" y="839" width="1" height="15" fill="#ffffff" />
<rect x="1607" y="846" width="5" height="8" fill="#00a000" />
<rect x="1617" y="839" width="1" height="15" fill="#ffffff" />
<rect x="1615" y="846" width="5" height="6" fill="#c00000" />
<rect x="1625" y="852" width="1" height="35" fill="#ffffff" />
<rect x="1623" y="852" width="5" height="27" fill="#c00000" />
<rect x="1633" y="854" width="1" height="25" fill="#ffffff" />
<rect x="1631" y="861" width="5" height="18" fill="#00a000" />
<rect x="1641" y="854" width="1" height="18" fill="#ffffff" />
<rect x="1639" y="860" width="5" height="2" fill="#00a000" />
<rect x="1649" y="857" width="1" height="26" fill="#ffffff" />
<rect x="1647" y="860" width="5" height="23" fill="#c00000" />
<rect x="1657" y="879" width="1" height="12" fill="#ffffff" />
<rect x="1655" y="881" width="5" height="2" fill="#00a000" />
<rect x="1665" y="880" width="1" height="35" fill="#ffffff" />
<rect x="1663" y="881" width="5" height="27" fill="#c00000" />
<rect x="1673" y="876" width="1" height="32" fill="#ffffff" />
<rect x="1671" y="876" width="5" height="32" fill="#00a000" />
<rect x="1681" y="866" width="1" height="10" fill="#ffffff" />
<rect x="1679" y="867" width="5" height="9" fill="#00a000" />
<rect x="1689" y="849" width="1" height="20" fill="#ffffff" />
<rect x="1687" y="855" width="5" height="14" fill="#00a000" />
<rect x="1697" y="834" width="1" height="22" fill="#ffffff" />
<rect x="1695" y="842" width="5" height="14" fill="#00a000" />
<rect x="1705" y="840" width="1" height="17" fill="#ffffff" />
<rect x="1703" y="842" width="5" height="14" fill="#c00000" />
<rect x="1713" y="854" width="1" height="15" fill="#ffffff" />
<rect x="1711" y="854" width="5" height="10" fill="#c00000" />
<rect x="1721" y="852" width="1" height="12" fill="#ffffff" />
<rect x="1719" y="857" width="5" height="7" fill="#00a000" />
<rect x="1729" y="846" width="1" height="12" fill="#ffffff" />
<rect x="1727" y="852" width="5" height="6" fill="#00a000" />
<rect x="1737" y="838" width="1" height="34" fill="#ffffff" />
<rect x="1735" y="852" width="5" height="20" fill="#c00000" />
<rect x="1745" y="867" width="1" height="16" fill="#ffffff" />
<rect x="1743" y="871" width="5" height="7" fill="#c00000" />
<rect x="1753" y="856" width="1" height="22" fill="#ffffff" />
<rect x="1751" y="858" width="5" height="20" fill="#00a000" />
<rect x="1761" y="841" width="1" height="18" fill="#ffffff" />
<rect x="1759" y="846" width="5" height="13" fill="#00a000" />
<rect x="1769" y="831" width="1" height="16" fill="#ffffff" />
<rect x="1767" y="838" width="5" height="9" fill="#00a000" />
<rect x="1777" y="835" width="1" height="12" fill="#ffffff" />
<rect x="1775" y="838" width="5" height="6" fill="#c00000" />
<rect x="1785" y="838" width="1" height="15" fill="#ffffff" />
<rect x="1783" y="843" width="5" height="10" fill="#c00000" />
<rect x="1793" y="852" width="1" height="12" fill="#ffffff" />
<rect x="1791" y="852" width="5" height="7" fill="#c00000" />
<rect x="1801" y="857" width="1" height="9" fill="#ffffff" />
<rect x="1799" y="858" width="5" height="4" fill="#c00000" />
<rect x="1809" y="859" width="1" height="20" fill="#ffffff" />
<rect x="1807" y="861" width="5" height="18" fill="#c00000" />
<rect x="1817" y="858" width="1" height="21" fill="#ffffff" />
<rect x="1815" y="861" width="5" height="18" fill="#00a000" />
<rect x="1825" y="856" width="1" height="17" fill="#ffffff" />
<rect x="1823" y="861" width="5" height="12" fill="#c00000" />
<rect x="1833" y="852" width="1" height="36" fill="#ffffff" />
<rect x="1831" y="853" width="5" height="20" fill="#00a000" />
<rect x="1841" y="828" width="1" height="26" fill="#ffffff" />
<rect x="1839" y="833" width="5" height="21" fill="#00a000" />
<rect x="1849" y="790" width="1" height="44" fill="#ffffff" />
<rect x="1847" y="792" width="5" height="42" fill="#00a000" />
<rect x="1857" y="773" width="1" height="23" fill="#ffffff" />
<rect x="1855" y="792" width="5" height="4" fill="#c00000" />
<rect x="1865" y="785" width="1" height="12" fill="#ffffff" />
<rect x="1863" y="792" width="5" height="4" fill="#00a000" />
<rect x="1873" y="786" width="1" height="7" fill="#ffffff" />
<rect x="1871" y="788" width="5" height="5" fill="#00a000" />
<rect x="1882" y="72" width="4" height="1" fill="#ffffff" />
<text x="1886.5" y="76.5" font-size="12" fill="#ffffff" text-anchor="start" textLength="27.03" lengthAdjust="spacingAndGlyphs" xml:space="preserve" >44.80</text>
<rect x="1882" y="135" width="4" height="1" fill="#ffffff" />
<text x="1886.5" y="139.5" font-size="12" fill="#ffffff" text-anchor="start" textLength="27.03" lengthAdjust="spacingAndGlyphs" xml:space="preserve" >44.00</text>
<rect x="1882" y="167" width="4" height="1" fill="#ffffff" />
<text x="1886.5" y="171.5" font-size="12" fill="#ffffff" text-anchor="start" textLength="27.03" lengthAdjust="spacingAndGlyphs" xml:space="preserve" >43.60</text>
<rect x="1882" y="230" width="4" height="1" fill="#ffffff" />
<text x="1886.5" y="234.5" font-size="12" fill="#ffffff" text-anchor="start" textLength="27.03" lengthAdjust="spacingAndGlyphs" xml:space="preserve" >42.80</text>
<rect x="1882" y="262" width="4" height="1" fill="#ffffff" />
<text x="1886.5" y="266.5" font-size="12" fill="#ffffff" text-anchor="start" textLength="27.03" lengthAdjust="spacingAndGlyphs" xml:space="preserve" >42.40</text>
<rect x="1882" y="325" width="4" height="1" fill="#ffffff" />
<text x="1886.5" y="329.5" font-size="12" fill="#ffffff" text-anchor="start" textLength="27.03" lengthAdjust="spacingAndGlyphs" xml:space="preserve" >41.60</text>
<rect x="1882" y="357" width="4" height="1" fill="#ffffff" />
<text x="1886.5" y="361.5" font-size="12" fill="#ffffff" text-anchor="start" textLength="27.03" lengthAdjust="spacingAndGlyphs" xml:space="preserve" >41.20</text>
<rect x="1882" y="420" width="4" height="1" fill="#ffffff" />
<text x="1886.5" y="424.5" font-size="12" fill="#ffffff" text-anchor="start" textLength="27.03" lengthAdjust="spacingAndGlyphs" xml:space="preserve" >40.40</text>
<rect x="1882" y="452" width="4" height="1" fill="#ffffff" />
<text x="1886.5" y="456.5" font-size="12" fill="#ffffff" text-anchor="start" textLength="27.03" lengthAdjust="spacingAndGlyphs" xml:space="preserve" >40.00</text>
<rect x="1882" y="515" width="4" height="1" fill="#ffffff" />
<text x="1886.5" y="519.5" font-size="12" fill="#ffffff" text-anchor="start" textLength="27.03" lengthAdjust="spacingAndGlyphs" xml:space="preserve" >39.20</text>
<rect x="1882" y="547" width="4" height="1" fill="#ffffff" />
<text x="1886.5" y="551.5" font-size="12" fill="#ffffff" text-anchor="start" textLength="27.03" lengthAdjust="spacingAndGlyphs" xml:space="preserve" >38.80</text>
<rect x="1882" y="610" width="4" height="1" fill="#ffffff" />
<text x="1886.5" y="614.5" font-size="12" fill="#ffffff" text-anchor="start" textLength="27.03" lengthAdjust="spacingAndGlyphs" xml:space="preserve" >38.00</text>
<rect x="1882" y="642" width="4" height="1" fill="#ffffff" />
<text x="1886.5" y="646.5" font-size="12" fill="#ffffff" text-anchor="start" textLength="27.03" lengthAdjust="spacingAndGlyphs" xml:space="preserve" >37.60</text>
<rect x="1882" y="674" width="4" height="1" fill="#ffffff" />
<text x="1886.5" y="678.5" font-size="12" fill="#ffffff" text-anchor="start" textLength="27.03" lengthAdjust="spacingAndGlyphs" xml:space="preserve" >37.20</text>
<rect x="1882" y="578" width="4" height="1" fill="#ffffff" />
<text x="1886.5" y="583.0" font-size="12" fill="#ffffff" text-anchor="start" textLength="27.03" lengthAdjust="spacingAndGlyphs" xml:space="preserve" >38.40</text>
<rect x="1882" y="104" width="4" height="1" fill="#ffffff" />
<text x="1886.5" y="108.0" font-size="12" fill="#ffffff" text-anchor="start" textLength="27.03" lengthAdjust="spacingAndGlyphs" xml:space="preserve" >44.40</text>
<rect x="1882" y="198" width="4" height="1" fill="#ffffff" />
<text x="1886.5" y="203.0" font-size="12" fill="#ffffff" text-anchor="start" textLength="27.03" lengthAdjust="spacingAndGlyphs" xml:space="preserve" >43.20</text>
<rect x="1882" y="294" width="4" height="1" fill="#ffffff" />
<text x="1886.5" y="298.0" font-size="12" fill="#ffffff" text-anchor="start" textLength="27.03" lengthAdjust="spacingAndGlyphs" xml:space="preserve" >42.00</text>
<rect x="1882" y="388" width="4" height="1" fill="#ffffff" />
<text x="1886.5" y="393.0" font-size="12" fill="#ffffff" text-anchor="start" textLength="27.03" lengthAdjust="spacingAndGlyphs" xml:space="preserve" >40.80</text>
<rect x="1882" y="484" width="4" height="1" fill="#ffffff" />
<text x="1886.5" y="488.0" font-size="12" fill="#ffffff" text-anchor="start" textLength="27.03" lengthAdjust="spacingAndGlyphs" xml:space="preserve" >39.60</text>
<rect x="1885" y="44" width="29" height="15" fill="#ffc88c" />
<text x="1886.5" y="57.0" font-size="12" fill="#808080" text-anchor="start" textLength="27.03" lengthAdjust="spacingAndGlyphs" xml:space="preserve" >45.04</text>
<rect x="1885" y="93" width="29" height="15" fill="#ffc88c" />
<text x="1886.5" y="105.5" font-size="12" fill="#808080" text-anchor="start" textLength="27.03" lengthAdjust="spacingAndGlyphs" xml:space="preserve" >44.43</text>
<rect x="1885" y="141" width="29" height="15" fill="#ffc88c" />
<text x="1886.5" y="153.5" font-size="12" fill="#808080" text-anchor="start" textLength="27.03" lengthAdjust="spacingAndGlyphs" xml:space="preserve" >43.82</text>
<rect x="1885" y="190" width="29" height="15" fill="#ffc88c" />
<text x="1886.5" y="202.5" font-size="12" fill="#808080" text-anchor="start" textLength="27.03" lengthAdjust="spacingAndGlyphs" xml:space="preserve" >43.21</text>
<rect x="1885" y="238" width="29" height="15" fill="#ffc88c" />
<text x="1886.5" y="250.5" font-size="12" fill="#808080" text-anchor="start" textLength="27.03" lengthAdjust="spacingAndGlyphs" xml:space="preserve" >42.60</text>
<rect x="1885" y="286" width="29" height="15" fill="#ffc88c" />
<text x="1886.5" y="299.0" font-size="12" fill="#808080" text-anchor="start" textLength="27.03" lengthAdjust="spacingAndGlyphs" xml:space="preserve" >41.99</text>
<rect x="1885" y="431" width="29" height="15" fill="#ffc88c" />
<text x="1886.5" y="443.5" font-size="12" fill="#808080" text-anchor="start" textLength="27.03" lengthAdjust="spacingAndGlyphs" xml:space="preserve" >40.16</text>
<rect x="1885" y="479" width="29" height="15" fill="#ffc88c" />
<text x="1886.5" y="491.5" font-size="12" fill="#808080" text-anchor="start" textLength="27.03" lengthAdjust="spacingAndGlyphs" xml:space="preserve" >39.55</text>
<rect x="1885" y="527" width="29" height="15" fill="#ffc88c" />
<text x="1886.5" y="539.5" font-size="12" fill="#808080" text-anchor="start" textLength="27.03" lengthAdjust="spacingAndGlyphs" xml:space="preserve" >38.94</text>
<rect x="1885" y="576" width="29" height="15" fill="#ffc88c" />
<text x="1886.5" y="588.5" font-size="12" fill="#808080" text-anchor="start" textLength="27.03" lengthAdjust="spacingAndGlyphs" xml:space="preserve" >38.33</text>
<rect x="1885" y="624" width="29" height="15" fill="#ffc88c" />
<text x="1886.5" y="636.5" font-size="12" fill="#808080" text-anchor="start" textLength="27.03" lengthAdjust="spacingAndGlyphs" xml:space="preserve" >37.72</text>
<rect x="1885" y="672" width="29" height="15" fill="#ffc88c" />
<text x="1886.5" y="684.5" font-size="12" fill="#808080" text-anchor="start" textLength="26.22" lengthAdjust="spacingAndGlyphs" xml:space="preserve" >37.11</text>
<rect x="1885" y="332" width="29" height="15" fill="#ffffff" />
<text x="1886.5" y="344" font-size="12" fill="#808080" text-anchor="start" textLength="27.03" lengthAdjust="spacingAndGlyphs" xml:space="preserve" >41.42</text>
<rect x="1885" y="347" width="29" height="2" fill="#0000ff" />
<rect x="1885" y="358" width="29" height="15" fill="#00ffff" />
<text x="1886.5" y="370" font-size="12" fill="#808080" text-anchor="start" textLength="27.03" lengthAdjust="spacingAndGlyphs" xml:space="preserve" >41.08</text>
<rect x="1885" y="383" width="29" height="15" fill="#0000ff" />
<text x="1886.5" y="395" font-size="12" fill="#a0a0ff" text-anchor="start" textLength="27.03" lengthAdjust="spacingAndGlyphs" xml:space="preserve" >40.77</text>
<rect x="1882" y="704" width="4" height="1" fill="#ffffff" />
<text x="1886.5" y="708.0" font-size="12" fill="#ffffff" text-anchor="start" textLength="24.56" lengthAdjust="spacingAndGlyphs" xml:space="preserve" >4000</text>
<rect x="1882" y="744" width="4" height="1" fill="#ffffff" />
<text x="1886.5" y="748.2" font-size="12" fill="#ffffff" text-anchor="start" textLength="24.56" lengthAdjust="spacingAndGlyphs" xml:space="preserve" >3000</text>
<rect x="1882" y="784" width="4" height="1" fill="#ffffff" />
<text x="1886.5" y="788.5" font-size="12" fill="#ffffff" text-anchor="start" textLength="24.56" lengthAdjust="spacingAndGlyphs" xml:space="preserve" >2000</text>
<rect x="1882" y="824" width="4" height="1" fill="#ffffff" />
<text x="1886.5" y="828.8" font-size="12" fill="#ffffff" text-anchor="start" textLength="24.56" lengthAdjust="spacingAndGlyphs" xml:space="preserve" >1000</text>
<rect x="1882" y="864" width="4" height="1" fill="#ffffff" />
<text x="1886.5" y="868.5" font-size="12" fill="#ffffff" text-anchor="start" textLength="6.14" lengthAdjust="spacingAndGlyphs" xml:space="preserve" >0</text>
<rect x="1882" y="904" width="4" height="1" fill="#ffffff" />
<text x="1886" y="908.8" font-size="12" fill="#ffffff" text-anchor="start" textLength="28.24" lengthAdjust="spacingAndGlyphs" xml:space="preserve" >-1000</text>
<rect x="1882" y="944" width="4" height="1" fill="#ffffff" />
<text x="1886" y="949.0" font-size="12" fill="#ffffff" text-anchor="start" textLength="28.24" lengthAdjust="spacingAndGlyphs" xml:space="preserve" >-2000</text>
<rect x="1882" y="985" width="4" height="1" fill="#ffffff" />
<text x="1886" y="989.1" font-size="12" fill="#ffffff" text-anchor="start" textLength="28.24" lengthAdjust="spacingAndGlyphs" xml:space="preserve" >-3000</text>
<rect x="1882" y="1024" width="4" height="1" fill="#ffffff" />
<text x="1886" y="1028.5" font-size="12" fill="#ffffff" text-anchor="start" textLength="28.24" lengthAdjust="spacingAndGlyphs" xml:space="preserve" >-4000</text>
<rect x="10" y="1029" width="1" height="3" fill="#ffffff" />
<text x="9.5" y="1044" font-size="12" fill="#ffffff" text-anchor="middle" textLength="34.31" lengthAdjust="spacingAndGlyphs" xml:space="preserve" >5:37:32</text>
<rect x="57" y="1029" width="1" height="3" fill="#ffffff" />
<text x="57" y="1044" font-size="12" fill="#ffffff" text-anchor="middle" textLength="34.31" lengthAdjust="spacingAndGlyphs" xml:space="preserve" >5:45:33</text>
<rect x="105" y="1029" width="1" height="3" fill="#ffffff" />
<text x="105" y="1044" font-size="12" fill="#ffffff" text-anchor="middle" textLength="34.31" lengthAdjust="spacingAndGlyphs" xml:space="preserve" >7:18:22</text>
<rect x="153" y="1029" width="1" height="3" fill="#ffffff" />
<text x="153" y="1044" font-size="12" fill="#ffffff" text-anchor="middle" textLength="34.31" lengthAdjust="spacingAndGlyphs" xml:space="preserve" >7:48:46</text>
<rect x="201" y="1029" width="1" height="3" fill="#ffffff" />
<text x="201" y="1044" font-size="12" fill="#ffffff" text-anchor="middle" textLength="34.31" lengthAdjust="spacingAndGlyphs" xml:space="preserve" >8:14:33</text>
<rect x="249" y="1029" width="1" height="3" fill="#ffffff" />
<text x="249" y="1044" font-size="12" fill="#ffffff" text-anchor="middle" textLength="34.31" lengthAdjust="spacingAndGlyphs" xml:space="preserve" >8:36:13</text>
<rect x="297" y="1029" width="1" height="3" fill="#ffffff" />
<text x="297" y="1044" font-size="12" fill="#ffffff" text-anchor="middle" textLength="34.31" lengthAdjust="spacingAndGlyphs" xml:space="preserve" >8:48:52</text>
<rect x="345" y="1029" width="1" height="3" fill="#ffffff" />
<text x="345" y="1044" font-size="12" fill="#ffffff" text-anchor="middle" textLength="34.31" lengthAdjust="spacingAndGlyphs" xml:space="preserve" >9:05:05</text>
<rect x="393" y="1029" width="1" height="3" fill="#ffffff" />
<text x="393" y="1044" font-size="12" fill="#ffffff" text-anchor="middle" textLength="34.31" lengthAdjust="spacingAndGlyphs" xml:space="preserve" >9:21:21</text>
<rect x="441" y="1029" width="1" height="3" fill="#ffffff" />
<text x="441" y="1044" font-size="12" fill="#ffffff" text-anchor="middle" textLength="34.31" lengthAdjust="spacingAndGlyphs" xml:space="preserve" >9:35:16</text>
<rect x="489" y="1029" width="1" height="3" fill="#ffffff" />
<text x="489" y="1044" font-size="12" fill="#ffffff" text-anchor="middle" textLength="34.31" lengthAdjust="spacingAndGlyphs" xml:space="preserve" >9:52:54</text>
<rect x="537" y="1029" width="1" height="3" fill="#ffffff" />
<text x="537" y="1044" font-size="12" fill="#ffffff" text-anchor="middle" textLength="40.03" lengthAdjust="spacingAndGlyphs" xml:space="preserve" >10:05:00</text>
<rect x="1306" y="1029" width="1" height="3" fill="#ffffff" />
<text x="1305.5" y="1044" font-size="12" fill="#ffffff" text-anchor="middle" textLength="34.31" lengthAdjust="spacingAndGlyphs" xml:space="preserve" >8:36:20</text>
<rect x="1354" y="1029" width="1" height="3" fill="#ffffff" />
<text x="1353.5" y="1044" font-size="12" fill="#ffffff" text-anchor="middle" textLength="34.31" lengthAdjust="spacingAndGlyphs" xml:space="preserve" >8:53:20</text>
<rect x="1402" y="1029" width="1" height="3" fill="#ffffff" />
<text x="1401.5" y="1044" font-size="12" fill="#ffffff" text-anchor="middle" textLength="34.31" lengthAdjust="spacingAndGlyphs" xml:space="preserve" >9:07:39</text>
<rect x="1450" y="1029" width="1" height="3" fill="#ffffff" />
<text x="1449.5" y="1044" font-size="12" fill="#ffffff" text-anchor="middle" textLength="34.31" lengthAdjust="spacingAndGlyphs" xml:space="preserve" >9:30:05</text>
<rect x="1498" y="1029" width="1" height="3" fill="#ffffff" />
<text x="1497.5" y="1044" font-size="12" fill="#ffffff" text-anchor="middle" textLength="34.31" lengthAdjust="spacingAndGlyphs" xml:space="preserve" >9:42:33</text>
<rect x="1546" y="1029" width="1" height="3" fill="#ffffff" />
<text x="1545.5" y="1044" font-size="12" fill="#ffffff" text-anchor="middle" textLength="34.31" lengthAdjust="spacingAndGlyphs" xml:space="preserve" >9:55:17</text>
<rect x="1594" y="1029" width="1" height="3" fill="#ffffff" />
<text x="1593.5" y="1044" font-size="12" fill="#ffffff" text-anchor="middle" textLength="40.03" lengthAdjust="spacingAndGlyphs" xml:space="preserve" >10:15:17</text>
<rect x="1650" y="1029" width="1" height="3" fill="#ffffff" />
<text x="1649.5" y="1044" font-size="12" fill="#ffffff" text-anchor="middle" textLength="40.03" lengthAdjust="spacingAndGlyphs" xml:space="preserve" >10:43:52</text>
<rect x="1706" y="1029" width="1" height="3" fill="#ffffff" />
<text x="1705.5" y="1044" font-size="12" fill="#ffffff" text-anchor="middle" textLength="39.27" lengthAdjust="spacingAndGlyphs" xml:space="preserve" >11:17:33</text>
<rect x="1762" y="1029" width="1" height="3" fill="#ffffff" />
<text x="1761.5" y="1044" font-size="12" fill="#ffffff" text-anchor="middle" textLength="39.27" lengthAdjust="spacingAndGlyphs" xml:space="preserve" >11:57:27</text>
<rect x="1818" y="1029" width="1" height="3" fill="#ffffff" />
<text x="1817.5" y="1044" font-size="12" fill="#ffffff" text-anchor="middle" textLength="40.03" lengthAdjust="spacingAndGlyphs" xml:space="preserve" >13:07:45</text>
<rect x="1874" y="1029" width="1" height="3" fill="#ffffff" />
<text x="1873.5" y="1044" font-size="12" fill="#ffffff" text-anchor="middle" textLength="40.03" lengthAdjust="spacingAndGlyphs" xml:space="preserve" >13:40:31</text>
<rect x="1904" y="1032" width="13" height="15" fill="#00c000" />
<text x="1910.5" y="1044" font-size="11" fill="#ffffff" text-anchor="middle" >7</text>
<rect x="1918" y="0" width="2" height="1050" fill="#ffffff" />
<rect x="0" y="1048" width="1920" height="2" fill="#ffffff" />
<path d="M1764.5,710.5 L1764.5,726 L1768.6,722.3 L1771.6,728.3 L1773.8,727.2 L1771.2,721.8 L1776,721.8 Z" fill="#fff" stroke="#000" stroke-width="1.1" stroke-linejoin="round" shape-rendering="geometricPrecision"/>
<rect x="5" y="25" width="88" height="15" fill="#00c800" />
<text x="9.5" y="37" font-size="12" fill="#ffffff" text-anchor="start" textLength="79.97" lengthAdjust="spacingAndGlyphs" xml:space="preserve" >Trade: 2@45.32</text>
<rect x="5" y="40" width="62" height="15" fill="#00c800" />
<text x="6" y="52" font-size="12" fill="#ffffff" text-anchor="start" textLength="60.61" lengthAdjust="spacingAndGlyphs" xml:space="preserve" >DPL: -0.11P</text>
<text x="95.7" y="37" font-size="12" fill="#ffffff" text-anchor="start" textLength="195.83" lengthAdjust="spacingAndGlyphs" xml:space="preserve" >CLK6-NYMEX [CBV]  3000 Volume  #1</text>
<rect x="295" y="25" width="43" height="14" fill="#ffffff" />
<text x="296" y="37" font-size="12" fill="#808080" text-anchor="start" textLength="43.01" lengthAdjust="spacingAndGlyphs" xml:space="preserve" >C=41.42</text>
<text x="342.3" y="37" font-size="12" fill="#ffffff" text-anchor="start" textLength="32.33" lengthAdjust="spacingAndGlyphs" xml:space="preserve" >T=472</text>
<rect x="377" y="25" width="51" height="14" fill="#00c000" />
<text x="378" y="37" font-size="12" fill="#808080" text-anchor="start" textLength="49.28" lengthAdjust="spacingAndGlyphs" xml:space="preserve" >Chg=0.01</text>
<rect x="431" y="25" width="64" height="14" fill="#ff0000" />
<text x="432" y="37" font-size="12" fill="#888080" text-anchor="start" textLength="63.59" lengthAdjust="spacingAndGlyphs" xml:space="preserve" >DChg= -0.03</text>
<text x="499" y="37" font-size="12" fill="#ffffff" text-anchor="start" textLength="876.30" lengthAdjust="spacingAndGlyphs" xml:space="preserve" >2016-03-22 13:44:47 H=41.46 L=41.41 O=41.41 V=643 B=41.42 A=41.43 12x23 RV:2357 BV=282 AV=361 DV=422071 CLK6-NYMEX [CBV]  1500 Volume  #6 | Initial Balance</text>
<text x="1381" y="37" font-size="12" fill="#ffc88c" text-anchor="start" textLength="499.37" lengthAdjust="spacingAndGlyphs" xml:space="preserve" >IB High Ext 6: 0.00  IB High Ext 5: 0.00  IB High Ext 4: 0.00  IB High Ext 3: 0.00  IB High Ext 2: 0.00  I</text>
<rect x="1881" y="24" width="37" height="16" fill="#808080" />
<rect x="1881" y="24" width="1" height="16" fill="#ffffff" />
<text x="1886.5" y="44.5" font-size="12" fill="#ffffff" text-anchor="start" textLength="27.03" lengthAdjust="spacingAndGlyphs" xml:space="preserve" >45.20</text>
<rect x="1882" y="40" width="4" height="1" fill="#ffffff" />
<rect x="7" y="3" width="6" height="1" fill="#000000"/><rect x="5" y="4" width="2" height="1" fill="#000000"/><rect x="7" y="4" width="2" height="1" fill="#00ff00"/><rect x="9" y="4" width="2" height="1" fill="#0000ff"/><rect x="11" y="4" width="1" height="1" fill="#00ff00"/><rect x="12" y="4" width="1" height="1" fill="#0000ff"/><rect x="13" y="4" width="2" height="1" fill="#000000"/><rect x="4" y="5" width="1" height="1" fill="#000000"/><rect x="5" y="5" width="4" height="1" fill="#00ff00"/><rect x="9" y="5" width="1" height="1" fill="#0000ff"/><rect x="10" y="5" width="2" height="1" fill="#00ff00"/><rect x="12" y="5" width="2" height="1" fill="#0000ff"/><rect x="14" y="5" width="1" height="1" fill="#00ff00"/><rect x="15" y="5" width="1" height="1" fill="#000000"/><rect x="3" y="6" width="1" height="1" fill="#000000"/><rect x="4" y="6" width="8" height="1" fill="#00ff00"/><rect x="12" y="6" width="2" height="1" fill="#0000ff"/><rect x="14" y="6" width="2" height="1" fill="#00ff00"/><rect x="16" y="6" width="1" height="1" fill="#000000"/><rect x="3" y="7" width="1" height="1" fill="#000000"/><rect x="4" y="7" width="1" height="1" fill="#0000ff"/><rect x="5" y="7" width="7" height="1" fill="#00ff00"/><rect x="12" y="7" width="3" height="1" fill="#0000ff"/><rect x="15" y="7" width="1" height="1" fill="#00ff00"/><rect x="16" y="7" width="1" height="1" fill="#000000"/><rect x="2" y="8" width="1" height="1" fill="#000000"/><rect x="3" y="8" width="2" height="1" fill="#0000ff"/><rect x="5" y="8" width="6" height="1" fill="#00ff00"/><rect x="11" y="8" width="4" height="1" fill="#0000ff"/><rect x="15" y="8" width="2" height="1" fill="#00ff00"/><rect x="17" y="8" width="1" height="1" fill="#000000"/><rect x="2" y="9" width="1" height="1" fill="#000000"/><rect x="3" y="9" width="2" height="1" fill="#0000ff"/><rect x="5" y="9" width="7" height="1" fill="#00ff00"/><rect x="12" y="9" width="3" height="1" fill="#0000ff"/><rect x="15" y="9" width="2" height="1" fill="#00ff00"/><rect x="17" y="9" width="1" height="1" fill="#000000"/><rect x="2" y="10" width="1" height="1" fill="#000000"/><rect x="3" y="10" width="3" height="1" fill="#0000ff"/><rect x="6" y="10" width="2" height="1" fill="#00ff00"/><rect x="8" y="10" width="3" height="1" fill="#0000ff"/><rect x="11" y="10" width="1" height="1" fill="#00ff00"/><rect x="12" y="10" width="4" height="1" fill="#0000ff"/><rect x="16" y="10" width="1" height="1" fill="#00ff00"/><rect x="17" y="10" width="1" height="1" fill="#000000"/><rect x="2" y="11" width="1" height="1" fill="#000000"/><rect x="3" y="11" width="4" height="1" fill="#0000ff"/><rect x="7" y="11" width="2" height="1" fill="#00ff00"/><rect x="9" y="11" width="8" height="1" fill="#0000ff"/><rect x="17" y="11" width="1" height="1" fill="#000000"/><rect x="2" y="12" width="1" height="1" fill="#000000"/><rect x="3" y="12" width="5" height="1" fill="#0000ff"/><rect x="8" y="12" width="3" height="1" fill="#00ff00"/><rect x="11" y="12" width="6" height="1" fill="#0000ff"/><rect x="17" y="12" width="1" height="1" fill="#000000"/><rect x="2" y="13" width="1" height="1" fill="#000000"/><rect x="3" y="13" width="6" height="1" fill="#0000ff"/><rect x="9" y="13" width="5" height="1" fill="#00ff00"/><rect x="14" y="13" width="3" height="1" fill="#0000ff"/><rect x="17" y="13" width="1" height="1" fill="#000000"/><rect x="3" y="14" width="1" height="1" fill="#000000"/><rect x="4" y="14" width="5" height="1" fill="#0000ff"/><rect x="9" y="14" width="5" height="1" fill="#00ff00"/><rect x="14" y="14" width="2" height="1" fill="#0000ff"/><rect x="16" y="14" width="1" height="1" fill="#000000"/><rect x="3" y="15" width="1" height="1" fill="#000000"/><rect x="4" y="15" width="6" height="1" fill="#0000ff"/><rect x="10" y="15" width="3" height="1" fill="#00ff00"/><rect x="13" y="15" width="3" height="1" fill="#0000ff"/><rect x="16" y="15" width="1" height="1" fill="#000000"/><rect x="4" y="16" width="1" height="1" fill="#000000"/><rect x="5" y="16" width="6" height="1" fill="#0000ff"/><rect x="11" y="16" width="2" height="1" fill="#00ff00"/><rect x="13" y="16" width="2" height="1" fill="#0000ff"/><rect x="15" y="16" width="1" height="1" fill="#000000"/><rect x="5" y="17" width="2" height="1" fill="#000000"/><rect x="7" y="17" width="4" height="1" fill="#0000ff"/><rect x="11" y="17" width="1" height="1" fill="#00ff00"/><rect x="12" y="17" width="1" height="1" fill="#0000ff"/><rect x="13" y="17" width="2" height="1" fill="#000000"/><rect x="7" y="18" width="6" height="1" fill="#000000"/>
<text x="23.5" y="15.8" font-size="12" fill="#858585" text-anchor="start" textLength="571.92" lengthAdjust="spacingAndGlyphs" xml:space="preserve" >CL ETH 3000V  SC CLK6-NYMEX [CBV]  3000 Volume  #1  L:1  Light Sweet Crude Oil Futures - NYMEX (May16)</text>
<path d="M1491,8.5 L1494,8.5 L1494,6.5 L1497,10.0 L1494,13.5 L1494,11.5 L1491,11.5 Z" fill="#505050"/>
<rect x="1497.5" y="6.0" width="10" height="8" fill="none" stroke="#505050" stroke-width="1"/>
<rect x="1499.5" y="8.0" width="6" height="4" fill="none" stroke="#505050" stroke-width="1"/>
<rect x="1501" y="14.5" width="3" height="1.5" fill="#505050"/><rect x="1499" y="15.5" width="7" height="1" fill="#505050"/>
<rect x="1540" y="5.0" width="9" height="9" fill="none" stroke="#000000" stroke-width="2"/>
<rect x="1542.5" y="7.5" width="4" height="4" fill="#000000"/>
<rect x="1581.5" y="8.0" width="11" height="6" fill="none" stroke="#505050" stroke-width="1"/>
<rect x="1584" y="9.5" width="4" height="3" fill="#505050"/>
<rect x="1594" y="8.5" width="1" height="6" fill="#a0a0a0"/><rect x="1596" y="8.5" width="1" height="6" fill="#a0a0a0"/>
<rect x="1627" y="8.5" width="1" height="6" fill="#a0a0a0"/><rect x="1629" y="8.5" width="1" height="6" fill="#a0a0a0"/>
<rect x="1631.5" y="8.0" width="11" height="6" fill="none" stroke="#505050" stroke-width="1"/>
<rect x="1636" y="9.5" width="4" height="3" fill="#505050"/>
<rect x="1674.5" y="6.0" width="12" height="9" fill="none" stroke="#505050" stroke-width="1"/>
<rect x="1680" y="7.5" width="1" height="7" fill="#a0a0a0"/><rect x="1682" y="7.5" width="1" height="7" fill="#a0a0a0"/>
<rect x="1671.5" y="9.0" width="6" height="4" fill="#fff" stroke="#505050" stroke-width="1"/>
<rect x="1716.5" y="6.0" width="12" height="9" fill="none" stroke="#505050" stroke-width="1"/>
<rect x="1720" y="7.5" width="1" height="7" fill="#a0a0a0"/><rect x="1722" y="7.5" width="1" height="7" fill="#a0a0a0"/>
<rect x="1725.5" y="9.0" width="6" height="4" fill="#fff" stroke="#505050" stroke-width="1"/>
<line x1="1799" y1="10.5" x2="1810" y2="10.5" stroke="#777" stroke-width="1" />
<rect x="1846.5" y="7.5" width="8" height="8" fill="#fff" stroke="#777" stroke-width="1"/>
<path d="M1848.5,5.5 L1856.5,5.5 L1856.5,13.5" fill="none" stroke="#777" stroke-width="1"/>
<rect x="1844.5" y="7.5" width="8" height="8" fill="#fff" stroke="#777" stroke-width="1"/>
<path d="M1889,5 L1900,16 M1900,5 L1889,16" stroke="#777" stroke-width="1" shape-rendering="geometricPrecision"/></svg>
<div class="a" style="left:531px;top:431px;width:768px;height:618px;box-shadow:0 0 10px 2px rgba(0,0,0,0.30);background:#f0f0f0"></div>
<div class="a" style="left:531px;top:431px;width:768px;height:618px;background:#f0f0f0;border:1px solid #8b8584;box-sizing:border-box"></div>
<div class="a" style="left:531px;top:431px;width:768px;height:26px;background:#7a7372"></div>
<div class="a" style="left:546px;top:494px;width:738px;height:503px;background:#f0f0f0;box-shadow:inset 1px 1px #fff,inset -1px -1px #696969,inset 2px 2px #e3e3e3,inset -2px -2px #a0a0a0"></div>
<div class="a" style="left:673px;top:474px;width:78px;height:21px;background:#f0f0f0;box-shadow:inset 1px 1px #fff,inset -1px 0 #696969,inset -2px 0 #a0a0a0"></div>
<div class="a" style="left:750px;top:474px;width:48px;height:21px;background:#f0f0f0;box-shadow:inset 1px 1px #fff,inset -1px 0 #696969,inset -2px 0 #a0a0a0"></div>
<div class="a" style="left:547px;top:471px;width:127px;height:25px;background:#f0f0f0;box-shadow:inset 1px 1px #fff,inset -1px 0 #696969,inset -2px 0 #a0a0a0"></div>
<div class="a" style="left:562px;top:580px;width:207px;height:23px;background:#fff;box-shadow:inset 1px 1px #a0a0a0,inset -1px -1px #fff,inset 2px 2px #696969,inset -2px -2px #e3e3e3"></div>
<div class="a" style="left:751px;top:582px;width:16px;height:19px;background:#f0f0f0;box-shadow:inset 1px 1px #fff,inset -1px -1px #696969,inset 2px 2px #e3e3e3,inset -2px -2px #a0a0a0"></div>
<div class="a" style="left:562px;top:632px;width:207px;height:23px;background:#fff;box-shadow:inset 1px 1px #a0a0a0,inset -1px -1px #fff,inset 2px 2px #696969,inset -2px -2px #e3e3e3"></div>
<div class="a" style="left:562px;top:684px;width:97px;height:23px;background:#fff;box-shadow:inset 1px 1px #a0a0a0,inset -1px -1px #fff,inset 2px 2px #696969,inset -2px -2px #e3e3e3"></div>
<div class="a" style="left:641px;top:686px;width:17px;height:19px;background:#f0f0f0;box-shadow:inset 1px 1px #fff,inset -1px -1px #696969,inset 2px 2px #e3e3e3,inset -2px -2px #a0a0a0"></div>
<div class="a" style="left:672px;top:680px;width:98px;height:28px;background:#f0f0f0;box-shadow:inset 1px 1px #fff,inset -1px -1px #696969,inset 2px 2px #e3e3e3,inset -2px -2px #a0a0a0"></div>
<div class="a" style="left:562px;top:736px;width:169px;height:23px;background:#fff;box-shadow:inset 1px 1px #a0a0a0,inset -1px -1px #fff,inset 2px 2px #696969,inset -2px -2px #e3e3e3"></div>
<div class="a" style="left:713px;top:738px;width:17px;height:19px;background:#f0f0f0;box-shadow:inset 1px 1px #fff,inset -1px -1px #696969,inset 2px 2px #e3e3e3,inset -2px -2px #a0a0a0"></div>
<div class="a" style="left:562px;top:776px;width:13px;height:13px;background:#fff;box-shadow:inset 1px 1px #a0a0a0,inset -1px -1px #fff,inset 2px 2px #696969,inset -2px -2px #e3e3e3"></div>
<div class="a" style="left:562px;top:799.5px;width:13px;height:13px;background:#fff;box-shadow:inset 1px 1px #a0a0a0,inset -1px -1px #fff,inset 2px 2px #696969,inset -2px -2px #e3e3e3"></div>
<div class="a" style="left:562px;top:831.5px;width:13px;height:13px;background:#fff;box-shadow:inset 1px 1px #a0a0a0,inset -1px -1px #fff,inset 2px 2px #696969,inset -2px -2px #e3e3e3"></div>
<div class="a" style="left:562px;top:862px;width:13px;height:13px;background:#fff;box-shadow:inset 1px 1px #a0a0a0,inset -1px -1px #fff,inset 2px 2px #696969,inset -2px -2px #e3e3e3"></div>
<div class="a" style="left:782px;top:510px;width:490px;height:400px;background:#fff;box-shadow:inset 1px 1px #a0a0a0,inset -1px -1px #fff,inset 2px 2px #696969,inset -2px -2px #e3e3e3"></div>
<div class="a" style="left:784px;top:512px;width:481px;height:19px;background:#fff;border-bottom:1px solid #e5e5e5;box-sizing:border-box"></div>
<div class="a" style="left:784px;top:512px;width:279px;height:19px;background:#f0f0f0;box-shadow:inset -1px 0 #a0a0a0,inset 0 -1px #a0a0a0"></div>
<div class="a" style="left:1063px;top:512px;width:200px;height:19px;background:#f0f0f0;box-shadow:inset -1px 0 #a0a0a0,inset 0 -1px #a0a0a0,inset 1px 0 #fff"></div>
<div class="a" style="left:1263px;top:512px;width:8px;height:19px;background:#f0f0f0;box-shadow:inset 0 -1px #a0a0a0"></div>
<div class="a" style="left:785px;top:567px;width:479px;height:17px;background:#f0f0f0"></div>
<div class="a" style="left:784px;top:549px;width:481px;height:1px;background:#f0f0f0"></div>
<div class="a" style="left:784px;top:567px;width:481px;height:1px;background:#f0f0f0"></div>
<div class="a" style="left:784px;top:583px;width:481px;height:1px;background:#f0f0f0"></div>
<div class="a" style="left:784px;top:601px;width:481px;height:1px;background:#f0f0f0"></div>
<div class="a" style="left:784px;top:617px;width:481px;height:1px;background:#f0f0f0"></div>
<div class="a" style="left:784px;top:635px;width:481px;height:1px;background:#f0f0f0"></div>
<div class="a" style="left:784px;top:651px;width:481px;height:1px;background:#f0f0f0"></div>
<div class="a" style="left:784px;top:669px;width:481px;height:1px;background:#f0f0f0"></div>
<div class="a" style="left:784px;top:685px;width:481px;height:1px;background:#f0f0f0"></div>
<div class="a" style="left:784px;top:703px;width:481px;height:1px;background:#f0f0f0"></div>
<div class="a" style="left:784px;top:719px;width:481px;height:1px;background:#f0f0f0"></div>
<div class="a" style="left:784px;top:737px;width:481px;height:1px;background:#f0f0f0"></div>
<div class="a" style="left:784px;top:753px;width:481px;height:1px;background:#f0f0f0"></div>
<div class="a" style="left:784px;top:771px;width:481px;height:1px;background:#f0f0f0"></div>
<div class="a" style="left:784px;top:787px;width:481px;height:1px;background:#f0f0f0"></div>
<div class="a" style="left:784px;top:805px;width:481px;height:1px;background:#f0f0f0"></div>
<div class="a" style="left:784px;top:821px;width:481px;height:1px;background:#f0f0f0"></div>
<div class="a" style="left:784px;top:839px;width:481px;height:1px;background:#f0f0f0"></div>
<div class="a" style="left:784px;top:855px;width:481px;height:1px;background:#f0f0f0"></div>
<div class="a" style="left:784px;top:873px;width:481px;height:1px;background:#f0f0f0"></div>
<div class="a" style="left:784px;top:889px;width:481px;height:1px;background:#f0f0f0"></div>
<div class="a" style="left:784px;top:907px;width:481px;height:1px;background:#f0f0f0"></div>
<div class="a" style="left:1064px;top:531px;width:1px;height:377px;background:#f0f0f0"></div>
<div class="a" style="left:1264px;top:531px;width:1px;height:377px;background:#f0f0f0"></div>
<div class="a" style="left:782px;top:925px;width:490px;height:46px;box-shadow:inset 1px 1px #a0a0a0,inset -1px -1px #fff,inset 2px 2px #fff,inset -2px -2px #a0a0a0"></div>
<div class="a" style="left:788px;top:917px;width:50px;height:14px;background:#f0f0f0"></div>
<div class="a" style="left:791px;top:936px;width:274px;height:24px;background:#fff;box-shadow:inset 1px 1px #a0a0a0,inset -1px -1px #fff,inset 2px 2px #696969,inset -2px -2px #e3e3e3"></div>
<div class="a" style="left:793px;top:939px;width:10px;height:17px;background:#3399ff"></div>
<div class="a" style="left:546px;top:1007px;width:100px;height:28px;background:#f0f0f0;box-shadow:inset 1px 1px #646464,inset -1px -1px #646464,inset 2px 2px #fff,inset -2px -2px #a0a0a0"></div>
<div class="a" style="left:650px;top:1007px;width:100px;height:28px;background:#f0f0f0;box-shadow:inset 1px 1px #fff,inset -1px -1px #696969,inset 2px 2px #e3e3e3,inset -2px -2px #a0a0a0"></div>
<div class="a" style="left:754px;top:1007px;width:100px;height:28px;background:#f0f0f0;box-shadow:inset 1px 1px #fff,inset -1px -1px #696969,inset 2px 2px #e3e3e3,inset -2px -2px #a0a0a0"></div>
<div class="a" style="left:858px;top:1007px;width:100px;height:28px;background:#f0f0f0;box-shadow:inset 1px 1px #fff,inset -1px -1px #696969,inset 2px 2px #e3e3e3,inset -2px -2px #a0a0a0"></div>
<div class="a" style="left:962px;top:1007px;width:109px;height:28px;background:#f0f0f0;box-shadow:inset 1px 1px #fff,inset -1px -1px #696969,inset 2px 2px #e3e3e3,inset -2px -2px #a0a0a0"></div>
<div class="a" style="left:1078px;top:1013px;width:13px;height:13px;background:#fff;box-shadow:inset 1px 1px #a0a0a0,inset -1px -1px #fff,inset 2px 2px #696969,inset -2px -2px #e3e3e3"></div><svg width="1920" height="1050" style="position:absolute;left:0;top:0" font-family='"Liberation Sans", sans-serif'><text x="535" y="448" font-size="11.4" fill="#ffffff" text-anchor="start" xml:space="preserve" >Study Settings: CLK6-NYMEX [CBV]  1500 Volume  #6 | Initial Balance (ID:9)</text>
<path d="M964,443.5 L967,441 L967,442.5 L970,442.5 L970,445.5 L967,445.5 L967,447 Z" fill="#fff"/>
<rect x="971.5" y="440.5" width="9" height="7" fill="none" stroke="#fff" stroke-width="1"/>
<rect x="975" y="448" width="2" height="1.5" fill="#fff"/><rect x="973" y="449" width="6" height="1" fill="#fff"/>
<rect x="1012" y="439" width="11" height="11" fill="#000"/><rect x="1014" y="441" width="7" height="7" fill="#7a7372"/>
<rect x="1015" y="442" width="5" height="5" fill="#000"/><rect x="1016" y="443" width="3" height="3" fill="#a09a99"/>
<rect x="1054.5" y="442.5" width="7" height="6" fill="none" stroke="#fff" stroke-width="1"/>
<rect x="1056" y="444" width="4" height="3" fill="#fff"/>
<path d="M1063.5,442.5 L1065.5,442.5 M1063.5,448.5 L1065.5,448.5 M1067.5,442.5 L1068.5,442.5 L1068.5,448.5 L1067.5,448.5 M1065.5,442.5 L1065.5,448.5" fill="none" stroke="#c8c4c3" stroke-width="1"/>
<path d="M1101.5,442.5 L1100.5,442.5 L1100.5,448.5 L1101.5,448.5 M1103.5,442.5 L1105.5,442.5 M1103.5,448.5 L1105.5,448.5 M1103.5,442.5 L1103.5,448.5" fill="none" stroke="#c8c4c3" stroke-width="1"/>
<rect x="1107.5" y="442.5" width="7" height="6" fill="none" stroke="#fff" stroke-width="1"/>
<rect x="1109" y="444" width="4" height="3" fill="#fff"/>
<rect x="1147.5" y="439.5" width="12" height="10" fill="none" stroke="#fff" stroke-width="1"/>
<rect x="1153" y="441" width="1" height="7" fill="#c8c4c3"/><rect x="1155" y="441" width="1" height="7" fill="#c8c4c3"/>
<rect x="1144.5" y="442.5" width="6" height="5" fill="#7a7372" stroke="#fff" stroke-width="1"/>
<rect x="1189.5" y="439.5" width="12" height="10" fill="none" stroke="#fff" stroke-width="1"/>
<rect x="1193" y="441" width="1" height="7" fill="#c8c4c3"/><rect x="1195" y="441" width="1" height="7" fill="#c8c4c3"/>
<rect x="1198.5" y="442.5" width="6" height="5" fill="#7a7372" stroke="#fff" stroke-width="1"/>
<g stroke="#fff" stroke-width="1.2"><line x1="1278" y1="439" x2="1288" y2="449"/><line x1="1288" y1="439" x2="1278" y2="449"/></g>
<text x="554" y="487.2" font-size="13.0" fill="#000" text-anchor="start" xml:space="preserve" >Settings and Inputs</text>
<text x="678" y="488.6" font-size="13.5" fill="#000" text-anchor="start" xml:space="preserve" >Subgraphs</text>
<text x="756" y="488.6" font-size="13.0" fill="#000" text-anchor="start" xml:space="preserve" >Alerts</text>
<text x="562" y="544.6" font-size="13.5" fill="#000" text-anchor="start" xml:space="preserve" >Standard Precedence</text>
<text x="562" y="572.8" font-size="13.25" fill="#000" text-anchor="start" xml:space="preserve" >Based On:</text>
<path d="M755,589 L763,589 L759,594 Z" fill="#000"/>
<text x="566" y="596.4" font-size="13.0" fill="#000" text-anchor="start" xml:space="preserve" >&lt;Main Price Graph&gt;</text>
<text x="562" y="625" font-size="13.2" fill="#000" text-anchor="start" xml:space="preserve" >Short Name:</text>
<text x="562" y="677" font-size="13.2" fill="#000" text-anchor="start" xml:space="preserve" >Chart Region:</text>
<path d="M645,693 L653,693 L649,698 Z" fill="#000"/>
<text x="566" y="700" font-size="13.2" fill="#000" text-anchor="start" xml:space="preserve" >1</text>
<text x="720" y="698" font-size="13.2" fill="#000" text-anchor="middle" xml:space="preserve" >Scale</text>
<text x="562" y="729" font-size="13.2" fill="#000" text-anchor="start" xml:space="preserve" >Value Format:</text>
<path d="M717,745 L725,745 L721,750 Z" fill="#000"/>
<text x="566" y="752.5" font-size="13.2" fill="#000" text-anchor="start" xml:space="preserve" >Inherited</text>
<text x="580.5" y="786" font-size="13.2" fill="#000" text-anchor="start" xml:space="preserve" >Display As Main Price Graph</text>
<text x="580.5" y="809.5" font-size="13.2" fill="#000" text-anchor="start" xml:space="preserve" >Hide Study</text>
<text x="580.5" y="834.3" font-size="13.2" fill="#000" text-anchor="start" xml:space="preserve" >Draw Study Underneath</text>
<text x="580.5" y="850" font-size="13.2" fill="#000" text-anchor="start" xml:space="preserve" >Main Price Graph</text>
<text x="580.5" y="872" font-size="13.2" fill="#000" text-anchor="start" xml:space="preserve" >Protect with Password</text>
<text x="790" y="526.6" font-size="13.2" fill="#000" text-anchor="start" xml:space="preserve" >Input Name</text>
<text x="1070" y="526.6" font-size="13.2" fill="#000" text-anchor="start" xml:space="preserve" >Input Value</text>
<text x="788" y="547" font-size="12.9" fill="#000" text-anchor="start" xml:space="preserve" >Full Synchronization of Source Chart to Desti...</text>
<text x="1070" y="547" font-size="13.1" fill="#000" text-anchor="start" xml:space="preserve" >No</text>
<text x="788" y="564" font-size="12.9" fill="#000" text-anchor="start" xml:space="preserve" >Match Source Bars to Destination Bars</text>
<text x="1070" y="564" font-size="13.1" fill="#000" text-anchor="start" xml:space="preserve" >Yes</text>
<text x="788" y="581" font-size="12.9" fill="#000" text-anchor="start" xml:space="preserve" >Multiplier</text>
<text x="1070" y="581" font-size="13.1" fill="#000" text-anchor="start" xml:space="preserve" >1</text>
<text x="788" y="598" font-size="12.9" fill="#000" text-anchor="start" xml:space="preserve" >Fill Blanks With Last Value</text>
<text x="1070" y="598" font-size="13.1" fill="#000" text-anchor="start" xml:space="preserve" >No</text>
<text x="788" y="615" font-size="12.9" fill="#000" text-anchor="start" xml:space="preserve" >Draw Zeros</text>
<text x="1070" y="615" font-size="13.1" fill="#000" text-anchor="start" xml:space="preserve" >No</text>
<text x="788" y="632" font-size="12.9" fill="#000" text-anchor="start" xml:space="preserve" >Study to Overlay</text>
<text x="1070" y="632" font-size="13.1" fill="#000" text-anchor="start" xml:space="preserve" >#6.ID5</text>
<text x="788" y="649" font-size="12.9" fill="#000" text-anchor="start" xml:space="preserve" >Use Colors from Source Study</text>
<text x="1070" y="649" font-size="13.1" fill="#000" text-anchor="start" xml:space="preserve" >Yes</text>
<text x="788" y="666" font-size="13.2" fill="#000" text-anchor="start" xml:space="preserve" >Data Copy Mode</text>
<text x="1070" y="666" font-size="13.1" fill="#000" text-anchor="start" xml:space="preserve" >Use Latest Value from Corres...</text>
<text x="788" y="683" font-size="12.9" fill="#000" text-anchor="start" xml:space="preserve" >Bar Time Matching Method</text>
<text x="1070" y="683" font-size="13.1" fill="#000" text-anchor="start" xml:space="preserve" >Nearest Match</text>
<text x="788" y="700" font-size="12.9" fill="#000" text-anchor="start" xml:space="preserve" >Copy Source Data to Latest Corresponding ...</text>
<text x="1070" y="700" font-size="13.1" fill="#000" text-anchor="start" xml:space="preserve" >No</text>
<text x="788" y="717" font-size="12.9" fill="#000" text-anchor="start" xml:space="preserve" >Use Styles and Widths from Source Study</text>
<text x="1070" y="717" font-size="13.1" fill="#000" text-anchor="start" xml:space="preserve" >Yes</text>
<text x="788" y="734" font-size="12.9" fill="#000" text-anchor="start" xml:space="preserve" >Always Use Short Names from Source Study</text>
<text x="1070" y="734" font-size="13.1" fill="#000" text-anchor="start" xml:space="preserve" >No</text>
<text x="788" y="751" font-size="12.9" fill="#000" text-anchor="start" xml:space="preserve" >Use Multicolumn Rectangle Style For Price B...</text>
<text x="1070" y="751" font-size="13.1" fill="#000" text-anchor="start" xml:space="preserve" >No</text>
<text x="790.5" y="929.3" font-size="13.2" fill="#000" text-anchor="start" xml:space="preserve" >Multiplier</text>
<text x="795" y="953" font-size="13.2" fill="#fff" text-anchor="start" xml:space="preserve" >1</text>
<text x="596" y="1025" font-size="13.2" fill="#000" text-anchor="middle" xml:space="preserve" >OK</text>
<text x="700.0" y="1025" font-size="13.2" fill="#000" text-anchor="middle" xml:space="preserve" >Cancel</text>
<text x="804.0" y="1025" font-size="13.2" fill="#000" text-anchor="middle" xml:space="preserve" >Apply</text>
<text x="908.0" y="1025" font-size="13.2" fill="#000" text-anchor="middle" xml:space="preserve" >Help</text>
<text x="1016.5" y="1025" font-size="13.2" fill="#000" text-anchor="middle" xml:space="preserve" >Reset Defaults</text>
<text x="1096" y="1017" font-size="13.3" fill="#000" text-anchor="start" xml:space="preserve" >Save these settings</text>
<text x="1096" y="1032.7" font-size="13.3" fill="#000" text-anchor="start" xml:space="preserve" >as the default</text></svg>
</body></html>
